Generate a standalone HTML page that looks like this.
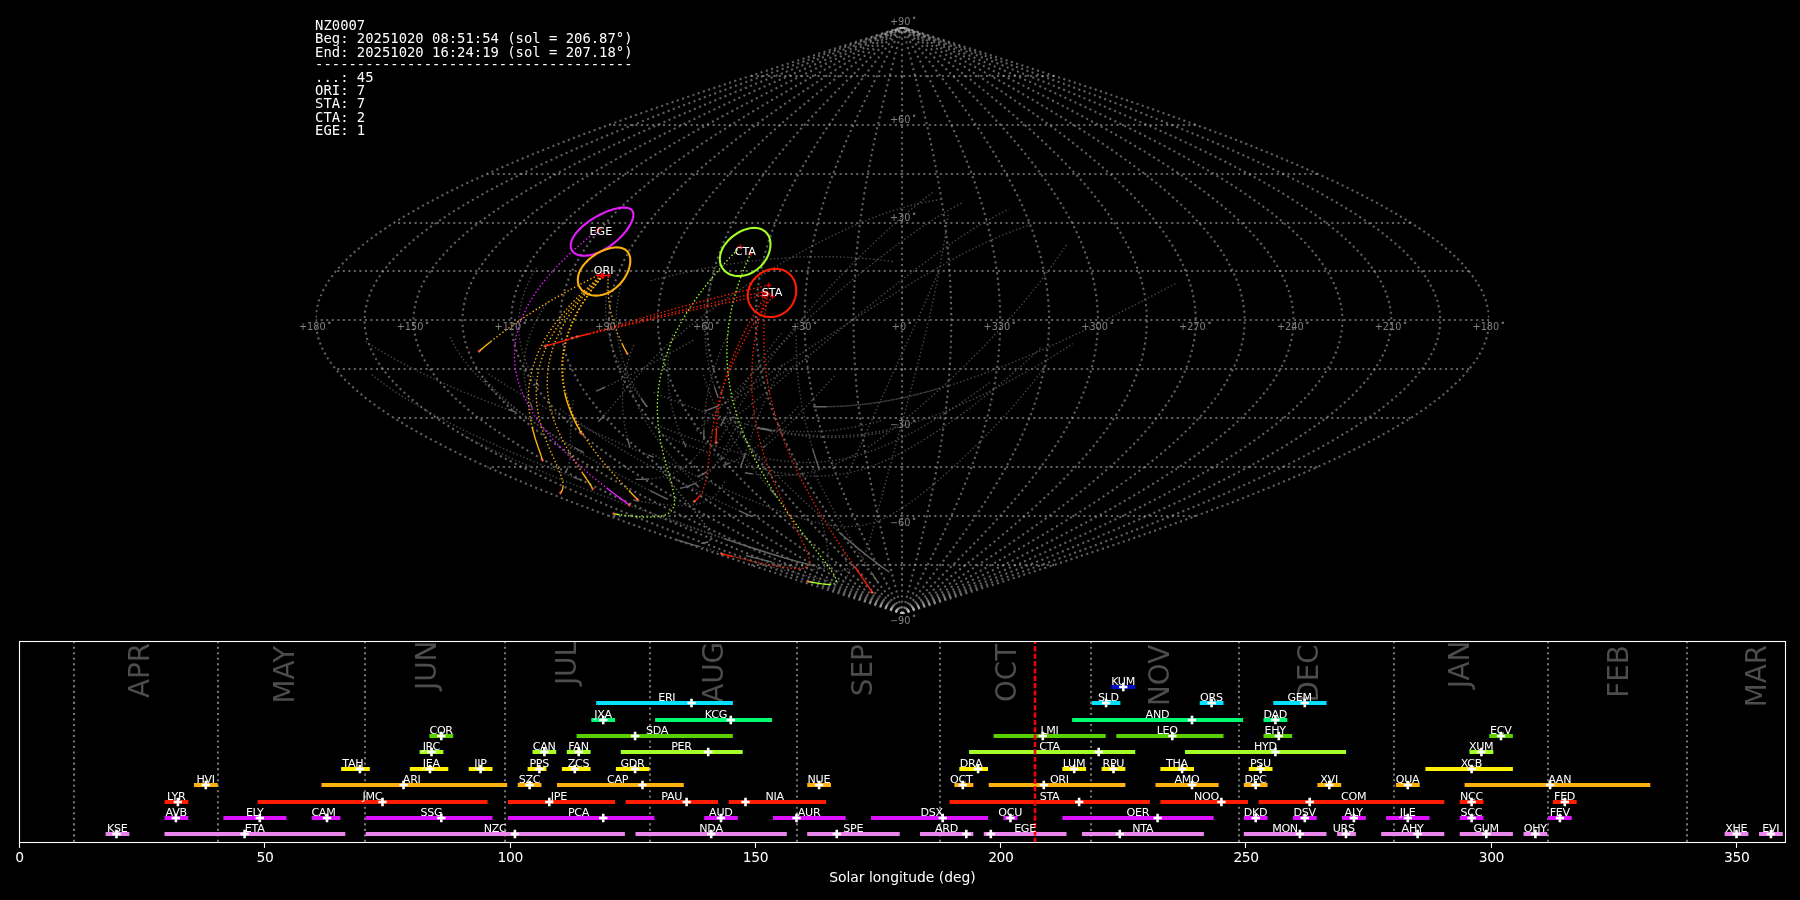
<!DOCTYPE html>
<html lang="en"><head><meta charset="utf-8"><title>NZ0007 shower association</title>
<style>html,body{margin:0;padding:0;background:#000;overflow:hidden}svg{display:block;will-change:transform}</style></head>
<body><svg width="1800" height="900" viewBox="0 0 1800 900">
<defs><clipPath id="actclip"><rect x="19.5" y="641.5" width="1766" height="201"/></clipPath><clipPath id="skyclip"><rect x="315.6" y="27.0" width="1173.6" height="586.8"/></clipPath></defs>
<rect width="1800" height="900" fill="#000000"/>
<g clip-path="url(#skyclip)">
<g fill="none" stroke="#c0c0c0" stroke-opacity="0.5" stroke-width="2.083" stroke-dasharray="2.083 3.437">
<polyline points="902.0,613.8 902.0,604.0 902.0,594.2 902.0,584.4 902.0,574.6 902.0,564.9 902.0,555.1 902.0,545.3 902.0,535.5 902.0,525.7 902.0,516.0 902.0,506.2 902.0,496.4 902.0,486.6 902.0,476.8 902.0,467.1 902.0,457.3 902.0,447.5 902.0,437.7 902.0,427.9 902.0,418.2 902.0,408.4 902.0,398.6 902.0,388.8 902.0,379.0 902.0,369.2 902.0,359.5 902.0,349.7 902.0,339.9 902.0,330.1 902.0,320.4 902.0,310.6 902.0,300.8 902.0,291.0 902.0,281.2 902.0,271.5 902.0,261.7 902.0,251.9 902.0,242.1 902.0,232.3 902.0,222.6 902.0,212.8 902.0,203.0 902.0,193.2 902.0,183.4 902.0,173.7 902.0,163.9 902.0,154.1 902.0,144.3 902.0,134.5 902.0,124.8 902.0,115.0 902.0,105.2 902.0,95.4 902.0,85.6 902.0,75.9 902.0,66.1 902.0,56.3 902.0,46.5 902.0,36.7 902.0,27.0"/>
<polyline points="902.4,613.8 899.8,604.0 897.3,594.2 894.8,584.4 892.2,574.6 889.7,564.9 887.3,555.1 884.9,545.3 882.5,535.5 880.2,525.7 877.9,516.0 875.8,506.2 873.7,496.4 871.6,486.6 869.7,476.8 867.8,467.1 866.1,457.3 864.4,447.5 862.8,437.7 861.4,427.9 860.1,418.2 858.8,408.4 857.7,398.6 856.7,388.8 855.9,379.0 855.2,369.2 854.6,359.5 854.1,349.7 853.8,339.9 853.6,330.1 853.5,320.4 853.6,310.6 853.8,300.8 854.1,291.0 854.6,281.2 855.2,271.5 855.9,261.7 856.7,251.9 857.7,242.1 858.8,232.3 860.1,222.6 861.4,212.8 862.8,203.0 864.4,193.2 866.1,183.4 867.8,173.7 869.7,163.9 871.6,154.1 873.7,144.3 875.8,134.5 877.9,124.8 880.2,115.0 882.5,105.2 884.9,95.4 887.3,85.6 889.7,75.9 892.2,66.1 894.8,56.3 897.3,46.5 899.8,36.7 902.4,27.0"/>
<polyline points="902.4,613.8 897.3,604.0 892.2,594.2 887.1,584.4 882.1,574.6 877.1,564.9 872.2,555.1 867.4,545.3 862.6,535.5 858.0,525.7 853.5,516.0 849.1,506.2 844.9,496.4 840.9,486.6 837.0,476.8 833.2,467.1 829.7,457.3 826.4,447.5 823.3,437.7 820.4,427.9 817.7,418.2 815.3,408.4 813.1,398.6 811.1,388.8 809.4,379.0 807.9,369.2 806.7,359.5 805.8,349.7 805.1,339.9 804.7,330.1 804.6,320.4 804.7,310.6 805.1,300.8 805.8,291.0 806.7,281.2 807.9,271.5 809.4,261.7 811.1,251.9 813.1,242.1 815.3,232.3 817.7,222.6 820.4,212.8 823.3,203.0 826.4,193.2 829.7,183.4 833.2,173.7 837.0,163.9 840.9,154.1 844.9,144.3 849.1,134.5 853.5,124.8 858.0,115.0 862.6,105.2 867.4,95.4 872.2,85.6 877.1,75.9 882.1,66.1 887.1,56.3 892.2,46.5 897.3,36.7 902.4,27.0"/>
<polyline points="902.4,613.8 894.7,604.0 887.1,594.2 879.5,584.4 871.9,574.6 864.4,564.9 857.1,555.1 849.8,545.3 842.7,535.5 835.8,525.7 829.0,516.0 822.5,506.2 816.2,496.4 810.1,486.6 804.2,476.8 798.7,467.1 793.4,457.3 788.4,447.5 783.7,437.7 779.4,427.9 775.4,418.2 771.7,408.4 768.4,398.6 765.4,388.8 762.9,379.0 760.7,369.2 758.9,359.5 757.5,349.7 756.5,339.9 755.9,330.1 755.7,320.4 755.9,310.6 756.5,300.8 757.5,291.0 758.9,281.2 760.7,271.5 762.9,261.7 765.4,251.9 768.4,242.1 771.7,232.3 775.4,222.6 779.4,212.8 783.7,203.0 788.4,193.2 793.4,183.4 798.7,173.7 804.2,163.9 810.1,154.1 816.2,144.3 822.5,134.5 829.0,124.8 835.8,115.0 842.7,105.2 849.8,95.4 857.1,85.6 864.4,75.9 871.9,66.1 879.5,56.3 887.1,46.5 894.7,36.7 902.4,27.0"/>
<polyline points="902.4,613.8 892.2,604.0 882.0,594.2 871.8,584.4 861.7,574.6 851.8,564.9 842.0,555.1 832.3,545.3 822.8,535.5 813.6,525.7 804.6,516.0 795.9,506.2 787.4,496.4 779.3,486.6 771.5,476.8 764.1,467.1 757.0,457.3 750.4,447.5 744.2,437.7 738.4,427.9 733.0,418.2 728.1,408.4 723.7,398.6 719.8,388.8 716.4,379.0 713.5,369.2 711.1,359.5 709.2,349.7 707.9,339.9 707.1,330.1 706.8,320.4 707.1,310.6 707.9,300.8 709.2,291.0 711.1,281.2 713.5,271.5 716.4,261.7 719.8,251.9 723.7,242.1 728.1,232.3 733.0,222.6 738.4,212.8 744.2,203.0 750.4,193.2 757.0,183.4 764.1,173.7 771.5,163.9 779.3,154.1 787.4,144.3 795.9,134.5 804.6,124.8 813.6,115.0 822.8,105.2 832.3,95.4 842.0,85.6 851.8,75.9 861.7,66.1 871.8,56.3 882.0,46.5 892.2,36.7 902.4,27.0"/>
<polyline points="902.4,613.8 889.6,604.0 876.8,594.2 864.2,584.4 851.6,574.6 839.1,564.9 826.8,555.1 814.8,545.3 803.0,535.5 791.4,525.7 780.1,516.0 769.2,506.2 758.7,496.4 748.5,486.6 738.8,476.8 729.5,467.1 720.7,457.3 712.4,447.5 704.6,437.7 697.3,427.9 690.7,418.2 684.5,408.4 679.0,398.6 674.1,388.8 669.9,379.0 666.2,369.2 663.2,359.5 660.9,349.7 659.2,339.9 658.2,330.1 657.9,320.4 658.2,310.6 659.2,300.8 660.9,291.0 663.2,281.2 666.2,271.5 669.9,261.7 674.1,251.9 679.0,242.1 684.5,232.3 690.7,222.6 697.3,212.8 704.6,203.0 712.4,193.2 720.7,183.4 729.5,173.7 738.8,163.9 748.5,154.1 758.7,144.3 769.2,134.5 780.1,124.8 791.4,115.0 803.0,105.2 814.8,95.4 826.8,85.6 839.1,75.9 851.6,66.1 864.2,56.3 876.8,46.5 889.6,36.7 902.4,27.0"/>
<polyline points="902.4,613.8 887.0,604.0 871.7,594.2 856.5,584.4 841.4,574.6 826.5,564.9 811.7,555.1 797.3,545.3 783.1,535.5 769.2,525.7 755.7,516.0 742.6,506.2 729.9,496.4 717.8,486.6 706.1,476.8 694.9,467.1 684.4,457.3 674.4,447.5 665.0,437.7 656.3,427.9 648.3,418.2 641.0,408.4 634.4,398.6 628.5,388.8 623.4,379.0 619.0,369.2 615.4,359.5 612.6,349.7 610.6,339.9 609.4,330.1 609.0,320.4 609.4,310.6 610.6,300.8 612.6,291.0 615.4,281.2 619.0,271.5 623.4,261.7 628.5,251.9 634.4,242.1 641.0,232.3 648.3,222.6 656.3,212.8 665.0,203.0 674.4,193.2 684.4,183.4 694.9,173.7 706.1,163.9 717.8,154.1 729.9,144.3 742.6,134.5 755.7,124.8 769.2,115.0 783.1,105.2 797.3,95.4 811.7,85.6 826.5,75.9 841.4,66.1 856.5,56.3 871.7,46.5 887.0,36.7 902.4,27.0"/>
<polyline points="902.4,613.8 884.5,604.0 866.6,594.2 848.9,584.4 831.2,574.6 813.8,564.9 796.6,555.1 779.7,545.3 763.2,535.5 747.0,525.7 731.2,516.0 716.0,506.2 701.2,496.4 687.0,486.6 673.4,476.8 660.4,467.1 648.0,457.3 636.4,447.5 625.5,437.7 615.3,427.9 606.0,418.2 597.4,408.4 589.7,398.6 582.8,388.8 576.9,379.0 571.8,369.2 567.6,359.5 564.3,349.7 562.0,339.9 560.6,330.1 560.1,320.4 560.6,310.6 562.0,300.8 564.3,291.0 567.6,281.2 571.8,271.5 576.9,261.7 582.8,251.9 589.7,242.1 597.4,232.3 606.0,222.6 615.3,212.8 625.5,203.0 636.4,193.2 648.0,183.4 660.4,173.7 673.4,163.9 687.0,154.1 701.2,144.3 716.0,134.5 731.2,124.8 747.0,115.0 763.2,105.2 779.7,95.4 796.6,85.6 813.8,75.9 831.2,66.1 848.9,56.3 866.6,46.5 884.5,36.7 902.4,27.0"/>
<polyline points="902.4,613.8 881.9,604.0 861.5,594.2 841.2,584.4 821.1,574.6 801.1,564.9 781.5,555.1 762.2,545.3 743.3,535.5 724.8,525.7 706.8,516.0 689.3,506.2 672.5,496.4 656.2,486.6 640.6,476.8 625.8,467.1 611.7,457.3 598.4,447.5 585.9,437.7 574.3,427.9 563.6,418.2 553.8,408.4 545.0,398.6 537.2,388.8 530.3,379.0 524.5,369.2 519.7,359.5 516.0,349.7 513.3,339.9 511.7,330.1 511.2,320.4 511.7,310.6 513.3,300.8 516.0,291.0 519.7,281.2 524.5,271.5 530.3,261.7 537.2,251.9 545.0,242.1 553.8,232.3 563.6,222.6 574.3,212.8 585.9,203.0 598.4,193.2 611.7,183.4 625.8,173.7 640.6,163.9 656.2,154.1 672.5,144.3 689.3,134.5 706.8,124.8 724.8,115.0 743.3,105.2 762.2,95.4 781.5,85.6 801.1,75.9 821.1,66.1 841.2,56.3 861.5,46.5 881.9,36.7 902.4,27.0"/>
<polyline points="902.4,613.8 879.4,604.0 856.4,594.2 833.6,584.4 810.9,574.6 788.5,564.9 766.4,555.1 744.7,545.3 723.4,535.5 702.6,525.7 682.3,516.0 662.7,506.2 643.7,496.4 625.4,486.6 607.9,476.8 591.2,467.1 575.3,457.3 560.4,447.5 546.4,437.7 533.3,427.9 521.3,418.2 510.3,408.4 500.3,398.6 491.5,388.8 483.8,379.0 477.3,369.2 471.9,359.5 467.7,349.7 464.7,339.9 462.9,330.1 462.3,320.4 462.9,310.6 464.7,300.8 467.7,291.0 471.9,281.2 477.3,271.5 483.8,261.7 491.5,251.9 500.3,242.1 510.3,232.3 521.3,222.6 533.3,212.8 546.4,203.0 560.4,193.2 575.3,183.4 591.2,173.7 607.9,163.9 625.4,154.1 643.7,144.3 662.7,134.5 682.3,124.8 702.6,115.0 723.4,105.2 744.7,95.4 766.4,85.6 788.5,75.9 810.9,66.1 833.6,56.3 856.4,46.5 879.4,36.7 902.4,27.0"/>
<polyline points="902.4,613.8 876.8,604.0 851.3,594.2 825.9,584.4 800.7,574.6 775.8,564.9 751.3,555.1 727.2,545.3 703.5,535.5 680.4,525.7 657.9,516.0 636.1,506.2 615.0,496.4 594.7,486.6 575.2,476.8 556.6,467.1 539.0,457.3 522.4,447.5 506.8,437.7 492.3,427.9 478.9,418.2 466.7,408.4 455.7,398.6 445.9,388.8 437.3,379.0 430.1,369.2 424.1,359.5 419.4,349.7 416.1,339.9 414.1,330.1 413.4,320.4 414.1,310.6 416.1,300.8 419.4,291.0 424.1,281.2 430.1,271.5 437.3,261.7 445.9,251.9 455.7,242.1 466.7,232.3 478.9,222.6 492.3,212.8 506.8,203.0 522.4,193.2 539.0,183.4 556.6,173.7 575.2,163.9 594.7,154.1 615.0,144.3 636.1,134.5 657.9,124.8 680.4,115.0 703.5,105.2 727.2,95.4 751.3,85.6 775.8,75.9 800.7,66.1 825.9,56.3 851.3,46.5 876.8,36.7 902.4,27.0"/>
<polyline points="902.4,613.8 874.2,604.0 846.2,594.2 818.3,584.4 790.6,574.6 763.2,564.9 736.2,555.1 709.6,545.3 683.6,535.5 658.2,525.7 633.4,516.0 609.4,506.2 586.2,496.4 563.9,486.6 542.5,476.8 522.0,467.1 502.7,457.3 484.4,447.5 467.2,437.7 451.3,427.9 436.6,418.2 423.1,408.4 411.0,398.6 400.2,388.8 390.8,379.0 382.8,369.2 376.3,359.5 371.1,349.7 367.4,339.9 365.2,330.1 364.5,320.4 365.2,310.6 367.4,300.8 371.1,291.0 376.3,281.2 382.8,271.5 390.8,261.7 400.2,251.9 411.0,242.1 423.1,232.3 436.6,222.6 451.3,212.8 467.2,203.0 484.4,193.2 502.7,183.4 522.0,173.7 542.5,163.9 563.9,154.1 586.2,144.3 609.4,134.5 633.4,124.8 658.2,115.0 683.6,105.2 709.6,95.4 736.2,85.6 763.2,75.9 790.6,66.1 818.3,56.3 846.2,46.5 874.2,36.7 902.4,27.0"/>
<polyline points="902.4,613.8 871.7,604.0 841.1,594.2 810.6,584.4 780.4,574.6 750.5,564.9 721.1,555.1 692.1,545.3 663.7,535.5 636.0,525.7 609.0,516.0 582.8,506.2 557.5,496.4 533.1,486.6 509.8,476.8 487.5,467.1 466.3,457.3 446.4,447.5 427.7,437.7 410.3,427.9 394.2,418.2 379.6,408.4 366.3,398.6 354.6,388.8 344.3,379.0 335.6,369.2 328.4,359.5 322.8,349.7 318.8,339.9 316.4,330.1 315.6,320.4 316.4,310.6 318.8,300.8 322.8,291.0 328.4,281.2 335.6,271.5 344.3,261.7 354.6,251.9 366.3,242.1 379.6,232.3 394.2,222.6 410.3,212.8 427.7,203.0 446.4,193.2 466.3,183.4 487.5,173.7 509.8,163.9 533.1,154.1 557.5,144.3 582.8,134.5 609.0,124.8 636.0,115.0 663.7,105.2 692.1,95.4 721.1,85.6 750.5,75.9 780.4,66.1 810.6,56.3 841.1,46.5 871.7,36.7 902.4,27.0"/>
<polyline points="902.4,613.8 933.1,604.0 963.7,594.2 994.2,584.4 1024.4,574.6 1054.3,564.9 1083.7,555.1 1112.7,545.3 1141.1,535.5 1168.8,525.7 1195.8,516.0 1222.0,506.2 1247.3,496.4 1271.7,486.6 1295.0,476.8 1317.3,467.1 1338.5,457.3 1358.4,447.5 1377.1,437.7 1394.5,427.9 1410.6,418.2 1425.2,408.4 1438.5,398.6 1450.2,388.8 1460.5,379.0 1469.2,369.2 1476.4,359.5 1482.0,349.7 1486.0,339.9 1488.4,330.1 1489.2,320.4 1488.4,310.6 1486.0,300.8 1482.0,291.0 1476.4,281.2 1469.2,271.5 1460.5,261.7 1450.2,251.9 1438.5,242.1 1425.2,232.3 1410.6,222.6 1394.5,212.8 1377.1,203.0 1358.4,193.2 1338.5,183.4 1317.3,173.7 1295.0,163.9 1271.7,154.1 1247.3,144.3 1222.0,134.5 1195.8,124.8 1168.8,115.0 1141.1,105.2 1112.7,95.4 1083.7,85.6 1054.3,75.9 1024.4,66.1 994.2,56.3 963.7,46.5 933.1,36.7 902.4,27.0"/>
<polyline points="902.4,613.8 930.6,604.0 958.6,594.2 986.5,584.4 1014.2,574.6 1041.6,564.9 1068.6,555.1 1095.2,545.3 1121.2,535.5 1146.6,525.7 1171.3,516.0 1195.4,506.2 1218.6,496.4 1240.9,486.6 1262.3,476.8 1282.8,467.1 1302.1,457.3 1320.4,447.5 1337.6,437.7 1353.5,427.9 1368.2,418.2 1381.7,408.4 1393.8,398.6 1404.6,388.8 1414.0,379.0 1422.0,369.2 1428.5,359.5 1433.7,349.7 1437.4,339.9 1439.6,330.1 1440.3,320.4 1439.6,310.6 1437.4,300.8 1433.7,291.0 1428.5,281.2 1422.0,271.5 1414.0,261.7 1404.6,251.9 1393.8,242.1 1381.7,232.3 1368.2,222.6 1353.5,212.8 1337.6,203.0 1320.4,193.2 1302.1,183.4 1282.8,173.7 1262.3,163.9 1240.9,154.1 1218.6,144.3 1195.4,134.5 1171.3,124.8 1146.6,115.0 1121.2,105.2 1095.2,95.4 1068.6,85.6 1041.6,75.9 1014.2,66.1 986.5,56.3 958.6,46.5 930.6,36.7 902.4,27.0"/>
<polyline points="902.4,613.8 928.0,604.0 953.5,594.2 978.9,584.4 1004.1,574.6 1029.0,564.9 1053.5,555.1 1077.6,545.3 1101.3,535.5 1124.4,525.7 1146.9,516.0 1168.7,506.2 1189.8,496.4 1210.1,486.6 1229.6,476.8 1248.2,467.1 1265.8,457.3 1282.4,447.5 1298.0,437.7 1312.5,427.9 1325.9,418.2 1338.1,408.4 1349.1,398.6 1358.9,388.8 1367.5,379.0 1374.7,369.2 1380.7,359.5 1385.4,349.7 1388.7,339.9 1390.7,330.1 1391.4,320.4 1390.7,310.6 1388.7,300.8 1385.4,291.0 1380.7,281.2 1374.7,271.5 1367.5,261.7 1358.9,251.9 1349.1,242.1 1338.1,232.3 1325.9,222.6 1312.5,212.8 1298.0,203.0 1282.4,193.2 1265.8,183.4 1248.2,173.7 1229.6,163.9 1210.1,154.1 1189.8,144.3 1168.7,134.5 1146.9,124.8 1124.4,115.0 1101.3,105.2 1077.6,95.4 1053.5,85.6 1029.0,75.9 1004.1,66.1 978.9,56.3 953.5,46.5 928.0,36.7 902.4,27.0"/>
<polyline points="902.4,613.8 925.4,604.0 948.4,594.2 971.2,584.4 993.9,574.6 1016.3,564.9 1038.4,555.1 1060.1,545.3 1081.4,535.5 1102.2,525.7 1122.5,516.0 1142.1,506.2 1161.1,496.4 1179.4,486.6 1196.9,476.8 1213.6,467.1 1229.5,457.3 1244.4,447.5 1258.4,437.7 1271.5,427.9 1283.5,418.2 1294.5,408.4 1304.5,398.6 1313.3,388.8 1321.0,379.0 1327.5,369.2 1332.9,359.5 1337.1,349.7 1340.1,339.9 1341.9,330.1 1342.5,320.4 1341.9,310.6 1340.1,300.8 1337.1,291.0 1332.9,281.2 1327.5,271.5 1321.0,261.7 1313.3,251.9 1304.5,242.1 1294.5,232.3 1283.5,222.6 1271.5,212.8 1258.4,203.0 1244.4,193.2 1229.5,183.4 1213.6,173.7 1196.9,163.9 1179.4,154.1 1161.1,144.3 1142.1,134.5 1122.5,124.8 1102.2,115.0 1081.4,105.2 1060.1,95.4 1038.4,85.6 1016.3,75.9 993.9,66.1 971.2,56.3 948.4,46.5 925.4,36.7 902.4,27.0"/>
<polyline points="902.4,613.8 922.9,604.0 943.3,594.2 963.6,584.4 983.7,574.6 1003.7,564.9 1023.3,555.1 1042.6,545.3 1061.5,535.5 1080.0,525.7 1098.0,516.0 1115.5,506.2 1132.3,496.4 1148.6,486.6 1164.2,476.8 1179.0,467.1 1193.1,457.3 1206.4,447.5 1218.9,437.7 1230.5,427.9 1241.2,418.2 1251.0,408.4 1259.8,398.6 1267.6,388.8 1274.5,379.0 1280.3,369.2 1285.1,359.5 1288.8,349.7 1291.5,339.9 1293.1,330.1 1293.6,320.4 1293.1,310.6 1291.5,300.8 1288.8,291.0 1285.1,281.2 1280.3,271.5 1274.5,261.7 1267.6,251.9 1259.8,242.1 1251.0,232.3 1241.2,222.6 1230.5,212.8 1218.9,203.0 1206.4,193.2 1193.1,183.4 1179.0,173.7 1164.2,163.9 1148.6,154.1 1132.3,144.3 1115.5,134.5 1098.0,124.8 1080.0,115.0 1061.5,105.2 1042.6,95.4 1023.3,85.6 1003.7,75.9 983.7,66.1 963.6,56.3 943.3,46.5 922.9,36.7 902.4,27.0"/>
<polyline points="902.4,613.8 920.3,604.0 938.2,594.2 955.9,584.4 973.6,574.6 991.0,564.9 1008.2,555.1 1025.1,545.3 1041.6,535.5 1057.8,525.7 1073.5,516.0 1088.8,506.2 1103.6,496.4 1117.8,486.6 1131.4,476.8 1144.4,467.1 1156.8,457.3 1168.4,447.5 1179.3,437.7 1189.5,427.9 1198.8,418.2 1207.4,408.4 1215.1,398.6 1222.0,388.8 1227.9,379.0 1233.0,369.2 1237.2,359.5 1240.5,349.7 1242.8,339.9 1244.2,330.1 1244.7,320.4 1244.2,310.6 1242.8,300.8 1240.5,291.0 1237.2,281.2 1233.0,271.5 1227.9,261.7 1222.0,251.9 1215.1,242.1 1207.4,232.3 1198.8,222.6 1189.5,212.8 1179.3,203.0 1168.4,193.2 1156.8,183.4 1144.4,173.7 1131.4,163.9 1117.8,154.1 1103.6,144.3 1088.8,134.5 1073.5,124.8 1057.8,115.0 1041.6,105.2 1025.1,95.4 1008.2,85.6 991.0,75.9 973.6,66.1 955.9,56.3 938.2,46.5 920.3,36.7 902.4,27.0"/>
<polyline points="902.4,613.8 917.8,604.0 933.1,594.2 948.3,584.4 963.4,574.6 978.3,564.9 993.1,555.1 1007.5,545.3 1021.7,535.5 1035.6,525.7 1049.1,516.0 1062.2,506.2 1074.9,496.4 1087.0,486.6 1098.7,476.8 1109.9,467.1 1120.4,457.3 1130.4,447.5 1139.8,437.7 1148.5,427.9 1156.5,418.2 1163.8,408.4 1170.4,398.6 1176.3,388.8 1181.4,379.0 1185.8,369.2 1189.4,359.5 1192.2,349.7 1194.2,339.9 1195.4,330.1 1195.8,320.4 1195.4,310.6 1194.2,300.8 1192.2,291.0 1189.4,281.2 1185.8,271.5 1181.4,261.7 1176.3,251.9 1170.4,242.1 1163.8,232.3 1156.5,222.6 1148.5,212.8 1139.8,203.0 1130.4,193.2 1120.4,183.4 1109.9,173.7 1098.7,163.9 1087.0,154.1 1074.9,144.3 1062.2,134.5 1049.1,124.8 1035.6,115.0 1021.7,105.2 1007.5,95.4 993.1,85.6 978.3,75.9 963.4,66.1 948.3,56.3 933.1,46.5 917.8,36.7 902.4,27.0"/>
<polyline points="902.4,613.8 915.2,604.0 928.0,594.2 940.6,584.4 953.2,574.6 965.7,564.9 978.0,555.1 990.0,545.3 1001.8,535.5 1013.4,525.7 1024.7,516.0 1035.6,506.2 1046.1,496.4 1056.3,486.6 1066.0,476.8 1075.3,467.1 1084.1,457.3 1092.4,447.5 1100.2,437.7 1107.5,427.9 1114.1,418.2 1120.3,408.4 1125.8,398.6 1130.7,388.8 1134.9,379.0 1138.6,369.2 1141.6,359.5 1143.9,349.7 1145.6,339.9 1146.6,330.1 1146.9,320.4 1146.6,310.6 1145.6,300.8 1143.9,291.0 1141.6,281.2 1138.6,271.5 1134.9,261.7 1130.7,251.9 1125.8,242.1 1120.3,232.3 1114.1,222.6 1107.5,212.8 1100.2,203.0 1092.4,193.2 1084.1,183.4 1075.3,173.7 1066.0,163.9 1056.3,154.1 1046.1,144.3 1035.6,134.5 1024.7,124.8 1013.4,115.0 1001.8,105.2 990.0,95.4 978.0,85.6 965.7,75.9 953.2,66.1 940.6,56.3 928.0,46.5 915.2,36.7 902.4,27.0"/>
<polyline points="902.4,613.8 912.6,604.0 922.8,594.2 933.0,584.4 943.1,574.6 953.0,564.9 962.8,555.1 972.5,545.3 982.0,535.5 991.2,525.7 1000.2,516.0 1008.9,506.2 1017.4,496.4 1025.5,486.6 1033.3,476.8 1040.7,467.1 1047.8,457.3 1054.4,447.5 1060.6,437.7 1066.4,427.9 1071.8,418.2 1076.7,408.4 1081.1,398.6 1085.0,388.8 1088.4,379.0 1091.3,369.2 1093.7,359.5 1095.6,349.7 1096.9,339.9 1097.7,330.1 1098.0,320.4 1097.7,310.6 1096.9,300.8 1095.6,291.0 1093.7,281.2 1091.3,271.5 1088.4,261.7 1085.0,251.9 1081.1,242.1 1076.7,232.3 1071.8,222.6 1066.4,212.8 1060.6,203.0 1054.4,193.2 1047.8,183.4 1040.7,173.7 1033.3,163.9 1025.5,154.1 1017.4,144.3 1008.9,134.5 1000.2,124.8 991.2,115.0 982.0,105.2 972.5,95.4 962.8,85.6 953.0,75.9 943.1,66.1 933.0,56.3 922.8,46.5 912.6,36.7 902.4,27.0"/>
<polyline points="902.4,613.8 910.1,604.0 917.7,594.2 925.3,584.4 932.9,574.6 940.4,564.9 947.7,555.1 955.0,545.3 962.1,535.5 969.0,525.7 975.8,516.0 982.3,506.2 988.6,496.4 994.7,486.6 1000.6,476.8 1006.1,467.1 1011.4,457.3 1016.4,447.5 1021.1,437.7 1025.4,427.9 1029.4,418.2 1033.1,408.4 1036.4,398.6 1039.4,388.8 1041.9,379.0 1044.1,369.2 1045.9,359.5 1047.3,349.7 1048.3,339.9 1048.9,330.1 1049.1,320.4 1048.9,310.6 1048.3,300.8 1047.3,291.0 1045.9,281.2 1044.1,271.5 1041.9,261.7 1039.4,251.9 1036.4,242.1 1033.1,232.3 1029.4,222.6 1025.4,212.8 1021.1,203.0 1016.4,193.2 1011.4,183.4 1006.1,173.7 1000.6,163.9 994.7,154.1 988.6,144.3 982.3,134.5 975.8,124.8 969.0,115.0 962.1,105.2 955.0,95.4 947.7,85.6 940.4,75.9 932.9,66.1 925.3,56.3 917.7,46.5 910.1,36.7 902.4,27.0"/>
<polyline points="902.4,613.8 907.5,604.0 912.6,594.2 917.7,584.4 922.7,574.6 927.7,564.9 932.6,555.1 937.4,545.3 942.2,535.5 946.8,525.7 951.3,516.0 955.7,506.2 959.9,496.4 963.9,486.6 967.8,476.8 971.6,467.1 975.1,457.3 978.4,447.5 981.5,437.7 984.4,427.9 987.1,418.2 989.5,408.4 991.7,398.6 993.7,388.8 995.4,379.0 996.9,369.2 998.1,359.5 999.0,349.7 999.7,339.9 1000.1,330.1 1000.2,320.4 1000.1,310.6 999.7,300.8 999.0,291.0 998.1,281.2 996.9,271.5 995.4,261.7 993.7,251.9 991.7,242.1 989.5,232.3 987.1,222.6 984.4,212.8 981.5,203.0 978.4,193.2 975.1,183.4 971.6,173.7 967.8,163.9 963.9,154.1 959.9,144.3 955.7,134.5 951.3,124.8 946.8,115.0 942.2,105.2 937.4,95.4 932.6,85.6 927.7,75.9 922.7,66.1 917.7,56.3 912.6,46.5 907.5,36.7 902.4,27.0"/>
<polyline points="902.4,613.8 905.0,604.0 907.5,594.2 910.0,584.4 912.6,574.6 915.1,564.9 917.5,555.1 919.9,545.3 922.3,535.5 924.6,525.7 926.9,516.0 929.0,506.2 931.1,496.4 933.2,486.6 935.1,476.8 937.0,467.1 938.7,457.3 940.4,447.5 942.0,437.7 943.4,427.9 944.7,418.2 946.0,408.4 947.1,398.6 948.1,388.8 948.9,379.0 949.6,369.2 950.2,359.5 950.7,349.7 951.0,339.9 951.2,330.1 951.3,320.4 951.2,310.6 951.0,300.8 950.7,291.0 950.2,281.2 949.6,271.5 948.9,261.7 948.1,251.9 947.1,242.1 946.0,232.3 944.7,222.6 943.4,212.8 942.0,203.0 940.4,193.2 938.7,183.4 937.0,173.7 935.1,163.9 933.2,154.1 931.1,144.3 929.0,134.5 926.9,124.8 924.6,115.0 922.3,105.2 919.9,95.4 917.5,85.6 915.1,75.9 912.6,66.1 910.0,56.3 907.5,46.5 905.0,36.7 902.4,27.0"/>
<polyline points="902.4,565.0 750.5,565.0"/>
<polyline points="1054.3,565.0 902.4,565.0"/>
<polyline points="902.4,516.0 609.0,516.0"/>
<polyline points="1195.8,516.0 902.4,516.0"/>
<polyline points="902.4,467.0 487.5,467.0"/>
<polyline points="1317.3,467.0 902.4,467.0"/>
<polyline points="902.4,418.0 394.2,418.0"/>
<polyline points="1410.6,418.0 902.4,418.0"/>
<polyline points="902.4,369.0 335.6,369.0"/>
<polyline points="1469.2,369.0 902.4,369.0"/>
<polyline points="902.4,320.0 315.6,320.0"/>
<polyline points="1489.2,320.0 902.4,320.0"/>
<polyline points="902.4,271.0 335.6,271.0"/>
<polyline points="1469.2,271.0 902.4,271.0"/>
<polyline points="902.4,223.0 394.2,223.0"/>
<polyline points="1410.6,223.0 902.4,223.0"/>
<polyline points="902.4,174.0 487.5,174.0"/>
<polyline points="1317.3,174.0 902.4,174.0"/>
<polyline points="902.4,125.0 609.0,125.0"/>
<polyline points="1195.8,125.0 902.4,125.0"/>
<polyline points="902.4,76.0 750.5,76.0"/>
<polyline points="1054.3,76.0 902.4,76.0"/>
</g>
<g fill="none" stroke="#666666" stroke-width="1.389">
<path d="M605.0 387.2 L603.2 388.0 L601.4 388.8 L599.7 389.6 L597.9 390.3 L596.1 391.1"/>
<path d="M641.7 398.9 L642.8 400.6 L643.8 402.2 L644.9 403.9 L646.1 405.5 L647.2 407.2"/>
<path d="M574.4 447.4 L576.3 448.5 L578.2 449.6 L580.1 450.6 L582.0 451.7 L583.9 452.8"/>
<path d="M603.9 415.6 L602.8 416.9 L601.7 418.1 L600.5 419.3 L599.4 420.5 L598.3 421.7"/>
<path d="M530.0 402.2 L530.5 403.6 L531.1 405.1 L531.6 406.5 L532.2 408.0 L532.8 409.4"/>
<path d="M508.3 409.4 L509.9 410.0 L511.4 410.5 L513.0 411.1 L514.5 411.6 L516.1 412.2"/>
<path d="M627.8 439.4 L628.2 441.0 L628.6 442.5 L629.1 444.1 L629.5 445.7 L630.0 447.2"/>
<path d="M648.3 455.0 L649.4 455.4 L650.5 455.9 L651.7 456.3 L652.8 456.8 L653.9 457.2"/>
<path d="M567.8 467.8 L567.4 468.7 L567.0 469.6 L566.6 470.5 L566.1 471.4 L565.6 472.2"/>
<path d="M536.1 381.7 L536.6 382.6 L537.2 383.5 L537.8 384.3 L538.3 385.2 L538.9 386.1"/>
<path d="M649.4 478.9 L646.8 479.1 L644.1 479.3 L641.4 479.4 L638.5 479.4 L635.6 479.4"/>
<path d="M650.0 490.6 L653.5 492.4 L657.1 494.1 L660.6 495.9 L664.2 497.6 L667.8 499.4"/>
<path d="M695.0 483.3 L692.3 484.6 L689.5 485.7 L686.5 486.7 L683.4 487.6 L680.0 488.3"/>
<path d="M695.0 483.3 L695.8 484.1 L696.6 484.9 L697.3 485.6 L698.1 486.4 L698.9 487.2"/>
<path d="M706.7 471.7 L704.9 472.8 L703.1 473.9 L701.2 474.9 L699.2 475.8 L697.2 476.7"/>
<path d="M573.3 477.2 L575.1 477.9 L576.9 478.6 L578.6 479.2 L580.4 479.9 L582.2 480.6"/>
<path d="M639.4 501.1 L638.2 500.9 L637.0 500.7 L635.8 500.5 L634.5 500.2 L633.3 500.0"/>
<path d="M700.0 546.7 L695.0 545.3 L690.0 543.8 L685.0 542.3 L680.0 540.9 L675.0 539.4"/>
<path d="M707.8 541.7 L706.8 542.1 L705.6 542.5 L704.3 542.9 L702.8 543.1 L701.1 543.3"/>
<path d="M714.4 386.7 L715.1 388.9 L715.9 391.1 L716.7 393.4 L717.5 395.6 L718.3 397.8"/>
<path d="M718.9 405.6 L716.0 406.8 L713.1 407.9 L710.2 409.0 L707.3 410.1 L704.4 411.1"/>
<path d="M641.1 398.9 L642.3 400.5 L643.5 402.0 L644.7 403.6 L645.9 405.1 L647.2 406.7"/>
<path d="M725.6 416.7 L724.6 418.5 L723.6 420.3 L722.6 422.1 L721.6 423.8 L720.6 425.6"/>
<path d="M826.7 406.7 L824.0 406.7 L821.4 406.8 L818.7 406.8 L816.0 406.7 L813.3 406.7"/>
<path d="M768.9 429.4 L766.6 429.1 L764.2 428.8 L761.9 428.5 L759.6 428.2 L757.2 427.8"/>
<path d="M772.2 431.1 L769.2 430.5 L766.2 429.9 L763.2 429.2 L760.2 428.5 L757.2 427.8"/>
<path d="M812.8 449.4 L814.0 453.4 L815.3 457.4 L816.6 461.4 L818.0 465.4 L819.4 469.4"/>
<path d="M745.6 452.8 L744.6 455.7 L743.6 458.5 L742.6 461.3 L741.6 464.0 L740.6 466.7"/>
<path d="M703.9 429.4 L703.9 431.5 L703.8 433.7 L703.8 435.8 L703.9 437.9 L703.9 440.0"/>
<path d="M683.3 441.1 L683.8 442.3 L684.4 443.5 L685.0 444.8 L685.5 446.0 L686.1 447.2"/>
<path d="M729.4 463.1 L728.1 463.6 L726.8 464.1 L725.5 464.6 L724.1 465.1 L722.8 465.6"/>
<path d="M752.8 473.9 L751.3 473.7 L749.7 473.5 L748.1 473.3 L746.6 473.0 L745.0 472.8"/>
<path d="M738.9 510.6 L741.6 511.8 L744.2 513.1 L746.9 514.3 L749.5 515.5 L752.2 516.7"/>
<path d="M770.0 488.9 L771.3 490.5 L772.7 492.0 L774.0 493.6 L775.3 495.1 L776.7 496.7"/>
<path d="M765.6 445.6 L765.0 446.0 L764.5 446.5 L763.9 446.9 L763.4 447.4 L762.8 447.8"/>
<path d="M723.9 538.7 L744.1 545.3 L763.6 551.5 L781.8 557.1 L798.5 561.9 L813.3 565.6"/>
<path d="M772.2 562.2 L767.3 561.0 L762.2 559.7 L757.0 558.4 L751.6 557.0 L746.1 555.6"/>
<path d="M838.9 532.2 L849.3 541.0 L859.6 549.6 L869.8 557.8 L879.8 565.4 L889.4 572.2"/>
<path d="M871.7 572.8 L872.9 574.7 L874.1 576.6 L875.4 578.4 L876.6 580.3 L877.8 582.2"/>
<path d="M708.3 541.7 L707.4 542.1 L706.3 542.5 L705.1 542.8 L703.7 543.1 L702.2 543.3"/>
</g>
<g fill="none" stroke="#666666" stroke-opacity="0.7" stroke-width="1.389" stroke-dasharray="1.389 2.292">
<path d="M693.3 340.2 L690.9 341.6 L688.5 342.9 L686.1 344.3 L683.7 345.6 L681.3 346.9 L678.9 348.3 L676.6 349.6 L674.2 350.9 L671.9 352.2 L669.5 353.5 L667.2 354.8 L664.9 356.1 L662.6 357.4 L660.3 358.6 L658.0 359.9 L655.7 361.2 L653.4 362.4 L651.2 363.7 L648.9 364.9 L646.7 366.1 L644.4 367.3 L642.2 368.5 L640.0 369.7 L637.7 370.9 L635.5 372.1 L633.3 373.2 L631.1 374.4 L628.9 375.5 L626.7 376.7 L624.6 377.8 L622.4 378.9 L620.2 380.0 L618.0 381.0 L615.8 382.1 L613.7 383.1 L611.5 384.2 L609.3 385.2 L607.2 386.2 L605.0 387.2"/>
<path d="M621.2 284.8 L620.4 287.7 L619.6 290.7 L619.0 293.6 L618.4 296.5 L617.9 299.4 L617.4 302.4 L617.1 305.3 L616.8 308.2 L616.5 311.1 L616.4 314.1 L616.3 317.0 L616.2 319.9 L616.3 322.8 L616.4 325.8 L616.6 328.7 L616.8 331.6 L617.2 334.5 L617.6 337.5 L618.0 340.4 L618.6 343.3 L619.2 346.2 L619.8 349.2 L620.6 352.1 L621.4 355.0 L622.3 357.9 L623.2 360.9 L624.2 363.8 L625.3 366.7 L626.5 369.6 L627.7 372.6 L629.0 375.5 L630.4 378.4 L631.8 381.3 L633.3 384.3 L634.8 387.2 L636.4 390.1 L638.1 393.0 L639.9 396.0 L641.7 398.9"/>
<path d="M450.0 337.1 L451.4 340.0 L452.8 342.8 L454.4 345.7 L456.1 348.5 L457.8 351.3 L459.7 354.2 L461.7 357.0 L463.8 359.9 L466.0 362.7 L468.2 365.5 L470.6 368.4 L473.1 371.2 L475.7 374.1 L478.3 376.9 L481.1 379.7 L484.0 382.6 L487.0 385.4 L490.0 388.2 L493.2 391.1 L496.4 393.9 L499.8 396.7 L503.2 399.6 L506.7 402.4 L510.3 405.2 L514.0 408.1 L517.8 410.9 L521.7 413.7 L525.6 416.5 L529.7 419.3 L533.8 422.2 L538.0 425.0 L542.3 427.8 L546.6 430.6 L551.1 433.4 L555.6 436.2 L560.2 439.0 L564.9 441.8 L569.6 444.6 L574.4 447.4"/>
<path d="M662.5 349.4 L660.6 351.2 L658.7 353.1 L656.9 354.9 L655.1 356.8 L653.3 358.6 L651.6 360.5 L649.9 362.3 L648.2 364.1 L646.5 366.0 L644.8 367.8 L643.2 369.6 L641.5 371.4 L639.9 373.2 L638.4 374.9 L636.8 376.7 L635.3 378.5 L633.7 380.2 L632.2 382.0 L630.8 383.7 L629.3 385.4 L627.8 387.1 L626.4 388.8 L625.0 390.5 L623.6 392.2 L622.2 393.9 L620.8 395.5 L619.5 397.1 L618.1 398.8 L616.8 400.4 L615.5 402.0 L614.2 403.6 L612.9 405.1 L611.6 406.7 L610.3 408.2 L609.0 409.7 L607.7 411.2 L606.4 412.7 L605.2 414.2 L603.9 415.6"/>
<path d="M547.9 301.4 L546.1 304.0 L544.4 306.6 L542.7 309.2 L541.1 311.8 L539.6 314.4 L538.1 317.0 L536.7 319.6 L535.4 322.2 L534.2 324.8 L533.0 327.4 L531.9 330.0 L530.9 332.6 L529.9 335.2 L529.0 337.8 L528.2 340.4 L527.5 343.0 L526.8 345.6 L526.2 348.2 L525.7 350.8 L525.2 353.4 L524.8 356.0 L524.5 358.6 L524.3 361.2 L524.1 363.8 L524.0 366.4 L524.0 369.0 L524.1 371.5 L524.2 374.1 L524.4 376.7 L524.6 379.3 L525.0 381.8 L525.4 384.4 L525.8 386.9 L526.4 389.5 L526.9 392.0 L527.6 394.6 L528.3 397.1 L529.1 399.7 L530.0 402.2"/>
<path d="M365.7 341.5 L368.5 343.4 L371.5 345.3 L374.5 347.2 L377.5 349.0 L380.6 350.9 L383.7 352.7 L386.9 354.6 L390.2 356.4 L393.4 358.3 L396.8 360.1 L400.2 362.0 L403.6 363.8 L407.0 365.6 L410.5 367.4 L414.1 369.2 L417.7 371.0 L421.3 372.8 L425.0 374.6 L428.7 376.4 L432.4 378.1 L436.2 379.9 L440.0 381.6 L443.8 383.4 L447.7 385.1 L451.6 386.8 L455.5 388.5 L459.4 390.2 L463.4 391.9 L467.4 393.5 L471.4 395.2 L475.4 396.8 L479.5 398.4 L483.6 400.1 L487.7 401.7 L491.8 403.2 L495.9 404.8 L500.0 406.3 L504.2 407.9 L508.3 409.4"/>
<path d="M633.7 345.1 L632.7 347.6 L631.7 350.1 L630.8 352.6 L629.9 355.1 L629.1 357.6 L628.4 360.1 L627.6 362.6 L627.0 365.1 L626.3 367.6 L625.8 370.1 L625.2 372.6 L624.8 375.0 L624.3 377.5 L623.9 380.0 L623.6 382.4 L623.3 384.9 L623.0 387.3 L622.8 389.8 L622.7 392.2 L622.6 394.6 L622.5 397.1 L622.5 399.5 L622.5 401.9 L622.5 404.3 L622.6 406.7 L622.8 409.1 L622.9 411.5 L623.1 413.9 L623.4 416.3 L623.7 418.6 L624.0 421.0 L624.4 423.3 L624.8 425.6 L625.2 428.0 L625.7 430.3 L626.2 432.6 L626.7 434.9 L627.2 437.1 L627.8 439.4"/>
<path d="M488.6 373.7 L491.9 376.0 L495.3 378.2 L498.8 380.5 L502.3 382.8 L505.9 385.0 L509.5 387.3 L513.1 389.5 L516.9 391.8 L520.6 394.0 L524.5 396.2 L528.3 398.4 L532.2 400.6 L536.2 402.8 L540.2 405.0 L544.2 407.2 L548.3 409.3 L552.4 411.5 L556.5 413.6 L560.7 415.7 L564.9 417.9 L569.1 420.0 L573.4 422.0 L577.7 424.1 L582.0 426.2 L586.3 428.2 L590.7 430.3 L595.0 432.3 L599.4 434.3 L603.8 436.3 L608.3 438.2 L612.7 440.2 L617.1 442.1 L621.6 444.0 L626.0 445.9 L630.5 447.8 L635.0 449.6 L639.4 451.4 L643.9 453.2 L648.3 455.0"/>
<path d="M573.4 399.9 L573.1 402.0 L572.7 404.1 L572.4 406.1 L572.1 408.1 L571.9 410.2 L571.6 412.2 L571.4 414.2 L571.2 416.2 L571.1 418.2 L570.9 420.1 L570.8 422.1 L570.7 424.0 L570.7 425.9 L570.6 427.8 L570.6 429.7 L570.5 431.6 L570.5 433.4 L570.5 435.2 L570.5 437.1 L570.5 438.8 L570.5 440.6 L570.5 442.3 L570.5 444.1 L570.4 445.8 L570.4 447.4 L570.4 449.1 L570.4 450.7 L570.3 452.3 L570.2 453.9 L570.1 455.4 L570.0 456.9 L569.9 458.4 L569.7 459.8 L569.5 461.2 L569.2 462.6 L568.9 464.0 L568.6 465.3 L568.2 466.6 L567.8 467.8"/>
<path d="M536.5 267.8 L534.8 270.7 L533.1 273.6 L531.5 276.5 L530.0 279.4 L528.6 282.4 L527.3 285.3 L526.1 288.2 L524.9 291.1 L523.9 294.1 L522.9 297.0 L522.1 299.9 L521.3 302.8 L520.7 305.7 L520.1 308.7 L519.6 311.6 L519.2 314.5 L518.9 317.4 L518.7 320.3 L518.6 323.3 L518.6 326.2 L518.7 329.1 L518.9 332.0 L519.1 335.0 L519.5 337.9 L520.0 340.8 L520.5 343.7 L521.2 346.6 L521.9 349.6 L522.7 352.5 L523.7 355.4 L524.7 358.3 L525.8 361.3 L527.0 364.2 L528.3 367.1 L529.7 370.0 L531.1 372.9 L532.7 375.9 L534.4 378.8 L536.1 381.7"/>
<path d="M710.4 437.1 L709.3 438.8 L708.2 440.4 L707.1 442.1 L706.0 443.7 L704.8 445.3 L703.7 446.9 L702.6 448.4 L701.4 450.0 L700.3 451.4 L699.1 452.9 L697.9 454.3 L696.7 455.8 L695.4 457.1 L694.2 458.5 L692.9 459.8 L691.6 461.0 L690.3 462.3 L688.9 463.5 L687.5 464.7 L686.1 465.8 L684.7 466.9 L683.2 467.9 L681.6 468.9 L680.0 469.9 L678.4 470.8 L676.7 471.7 L675.0 472.5 L673.2 473.3 L671.4 474.1 L669.5 474.8 L667.5 475.4 L665.5 476.0 L663.4 476.6 L661.3 477.1 L659.0 477.6 L656.7 478.0 L654.4 478.3 L651.9 478.6 L649.4 478.9"/>
<path d="M484.4 378.5 L486.9 381.4 L489.6 384.3 L492.4 387.2 L495.3 390.1 L498.3 393.0 L501.3 395.9 L504.5 398.7 L507.8 401.6 L511.1 404.5 L514.6 407.4 L518.1 410.3 L521.7 413.2 L525.5 416.1 L529.3 418.9 L533.2 421.8 L537.2 424.7 L541.2 427.6 L545.4 430.5 L549.6 433.3 L554.0 436.2 L558.4 439.1 L562.8 442.0 L567.4 444.8 L572.1 447.7 L576.8 450.6 L581.6 453.5 L586.4 456.3 L591.4 459.2 L596.4 462.1 L601.4 464.9 L606.6 467.8 L611.8 470.6 L617.1 473.5 L622.4 476.4 L627.8 479.2 L633.3 482.1 L638.8 484.9 L644.4 487.8 L650.0 490.6"/>
<path d="M738.3 422.5 L737.3 424.6 L736.3 426.6 L735.3 428.6 L734.3 430.5 L733.3 432.5 L732.3 434.4 L731.4 436.4 L730.4 438.3 L729.5 440.1 L728.5 442.0 L727.6 443.9 L726.6 445.7 L725.7 447.5 L724.7 449.3 L723.8 451.0 L722.8 452.7 L721.8 454.4 L720.9 456.1 L719.9 457.8 L718.9 459.4 L717.9 461.0 L716.9 462.5 L715.9 464.0 L714.8 465.5 L713.7 467.0 L712.6 468.4 L711.5 469.8 L710.3 471.2 L709.2 472.5 L707.9 473.8 L706.7 475.0 L705.4 476.2 L704.0 477.3 L702.7 478.4 L701.2 479.5 L699.8 480.5 L698.2 481.5 L696.6 482.4 L695.0 483.3"/>
<path d="M626.6 372.9 L627.3 375.7 L628.0 378.6 L628.7 381.4 L629.5 384.3 L630.4 387.2 L631.4 390.0 L632.4 392.9 L633.5 395.7 L634.6 398.6 L635.8 401.4 L637.1 404.3 L638.4 407.1 L639.8 410.0 L641.2 412.8 L642.7 415.7 L644.3 418.5 L645.9 421.4 L647.6 424.2 L649.3 427.0 L651.1 429.9 L652.9 432.7 L654.9 435.5 L656.8 438.4 L658.8 441.2 L660.9 444.0 L663.0 446.9 L665.2 449.7 L667.4 452.5 L669.7 455.3 L672.0 458.1 L674.4 460.9 L676.8 463.8 L679.3 466.6 L681.8 469.4 L684.3 472.2 L686.9 475.0 L689.6 477.7 L692.3 480.5 L695.0 483.3"/>
<path d="M757.1 408.4 L755.8 410.4 L754.5 412.4 L753.2 414.4 L751.9 416.4 L750.6 418.4 L749.4 420.3 L748.1 422.2 L746.9 424.1 L745.7 426.0 L744.4 427.9 L743.2 429.8 L742.0 431.6 L740.8 433.4 L739.6 435.2 L738.4 437.0 L737.2 438.8 L736.0 440.5 L734.8 442.2 L733.6 443.9 L732.3 445.6 L731.1 447.3 L729.9 448.9 L728.7 450.5 L727.5 452.0 L726.2 453.6 L725.0 455.1 L723.7 456.6 L722.4 458.0 L721.1 459.5 L719.8 460.8 L718.4 462.2 L717.1 463.5 L715.7 464.8 L714.3 466.0 L712.8 467.3 L711.3 468.4 L709.8 469.6 L708.3 470.6 L706.7 471.7"/>
<path d="M371.7 374.6 L375.2 377.3 L378.7 380.0 L382.4 382.8 L386.2 385.5 L390.1 388.2 L394.0 390.9 L398.1 393.6 L402.3 396.3 L406.6 399.0 L411.0 401.6 L415.5 404.3 L420.1 407.0 L424.8 409.7 L429.6 412.4 L434.4 415.0 L439.4 417.7 L444.4 420.4 L449.6 423.0 L454.8 425.7 L460.1 428.3 L465.4 431.0 L470.9 433.6 L476.4 436.2 L482.0 438.9 L487.7 441.5 L493.5 444.1 L499.3 446.7 L505.1 449.3 L511.1 451.9 L517.1 454.5 L523.1 457.0 L529.3 459.6 L535.4 462.1 L541.6 464.7 L547.9 467.2 L554.2 469.7 L560.5 472.2 L566.9 474.7 L573.3 477.2"/>
<path d="M724.5 481.5 L723.8 483.0 L723.1 484.6 L722.3 486.0 L721.4 487.5 L720.6 488.9 L719.7 490.2 L718.7 491.5 L717.7 492.8 L716.6 494.0 L715.5 495.1 L714.2 496.2 L713.0 497.3 L711.6 498.3 L710.2 499.2 L708.7 500.1 L707.1 500.9 L705.4 501.6 L703.6 502.3 L701.8 502.9 L699.8 503.5 L697.7 504.0 L695.5 504.4 L693.2 504.8 L690.8 505.1 L688.3 505.3 L685.6 505.4 L682.8 505.5 L679.9 505.5 L676.9 505.5 L673.7 505.3 L670.4 505.1 L667.0 504.9 L663.4 504.5 L659.8 504.1 L655.9 503.6 L652.0 503.1 L647.9 502.5 L643.7 501.8 L639.4 501.1"/>
<path d="M843.1 550.0 L843.8 552.4 L844.5 554.9 L845.1 557.3 L845.7 559.6 L846.3 561.9 L846.8 564.2 L847.2 566.3 L847.6 568.4 L847.8 570.4 L847.9 572.2 L847.9 574.0 L847.6 575.6 L847.2 577.0 L846.4 578.3 L845.4 579.3 L844.0 580.2 L842.2 580.8 L839.9 581.1 L837.2 581.2 L833.9 581.1 L830.1 580.6 L825.8 580.0 L821.0 579.1 L815.6 577.9 L809.8 576.6 L803.6 575.1 L797.0 573.5 L790.1 571.7 L782.8 569.8 L775.3 567.8 L767.5 565.7 L759.5 563.5 L751.4 561.3 L743.1 559.0 L734.6 556.6 L726.1 554.2 L717.5 551.7 L708.8 549.2 L700.0 546.7"/>
<path d="M660.5 468.4 L662.2 470.9 L664.0 473.4 L665.8 475.8 L667.6 478.3 L669.5 480.7 L671.3 483.1 L673.2 485.5 L675.1 487.9 L677.0 490.2 L678.9 492.6 L680.7 494.9 L682.6 497.2 L684.5 499.4 L686.4 501.7 L688.2 503.9 L690.0 506.1 L691.8 508.2 L693.6 510.3 L695.3 512.4 L697.0 514.4 L698.6 516.4 L700.2 518.4 L701.7 520.3 L703.1 522.1 L704.4 523.9 L705.7 525.7 L706.8 527.4 L707.8 529.0 L708.7 530.6 L709.5 532.1 L710.1 533.5 L710.5 534.8 L710.7 536.1 L710.8 537.3 L710.7 538.3 L710.3 539.3 L709.7 540.2 L708.9 541.0 L707.8 541.7"/>
<path d="M713.9 272.7 L713.0 275.7 L712.2 278.6 L711.4 281.5 L710.6 284.4 L709.9 287.3 L709.2 290.3 L708.6 293.2 L708.1 296.1 L707.6 299.0 L707.1 302.0 L706.7 304.9 L706.3 307.8 L706.0 310.7 L705.7 313.6 L705.5 316.6 L705.3 319.5 L705.2 322.4 L705.1 325.3 L705.0 328.3 L705.0 331.2 L705.1 334.1 L705.2 337.0 L705.4 339.9 L705.6 342.9 L705.8 345.8 L706.1 348.7 L706.5 351.6 L706.9 354.6 L707.3 357.5 L707.8 360.4 L708.4 363.3 L709.0 366.2 L709.6 369.2 L710.3 372.1 L711.0 375.0 L711.8 377.9 L712.6 380.9 L713.5 383.8 L714.4 386.7"/>
<path d="M809.3 356.8 L806.9 358.3 L804.5 359.8 L802.1 361.2 L799.7 362.6 L797.4 364.1 L795.0 365.5 L792.7 366.9 L790.3 368.3 L788.0 369.7 L785.6 371.1 L783.3 372.5 L781.0 373.8 L778.6 375.2 L776.3 376.5 L774.0 377.9 L771.7 379.2 L769.4 380.5 L767.1 381.8 L764.8 383.1 L762.5 384.4 L760.2 385.6 L757.9 386.9 L755.6 388.1 L753.3 389.3 L751.0 390.5 L748.7 391.7 L746.4 392.9 L744.1 394.0 L741.8 395.2 L739.6 396.3 L737.3 397.4 L735.0 398.5 L732.7 399.6 L730.4 400.6 L728.1 401.6 L725.8 402.7 L723.5 403.7 L721.2 404.6 L718.9 405.6"/>
<path d="M607.5 285.6 L607.1 288.5 L606.6 291.4 L606.3 294.3 L606.0 297.2 L605.8 300.1 L605.7 303.0 L605.7 305.9 L605.7 308.8 L605.8 311.8 L605.9 314.7 L606.2 317.6 L606.5 320.5 L606.8 323.4 L607.3 326.3 L607.8 329.2 L608.4 332.1 L609.1 335.0 L609.8 337.9 L610.6 340.8 L611.5 343.7 L612.4 346.6 L613.4 349.5 L614.5 352.4 L615.7 355.3 L616.9 358.2 L618.2 361.1 L619.5 364.1 L621.0 367.0 L622.5 369.9 L624.0 372.8 L625.7 375.7 L627.4 378.6 L629.1 381.5 L631.0 384.4 L632.9 387.3 L634.8 390.2 L636.9 393.1 L638.9 396.0 L641.1 398.9"/>
<path d="M781.6 333.2 L779.8 335.4 L778.0 337.6 L776.3 339.9 L774.5 342.1 L772.8 344.3 L771.1 346.6 L769.5 348.8 L767.8 351.0 L766.2 353.2 L764.6 355.4 L763.0 357.6 L761.4 359.8 L759.8 362.0 L758.3 364.2 L756.8 366.4 L755.3 368.6 L753.8 370.8 L752.3 373.0 L750.9 375.1 L749.4 377.3 L748.0 379.4 L746.6 381.6 L745.3 383.7 L743.9 385.9 L742.6 388.0 L741.2 390.1 L739.9 392.2 L738.7 394.3 L737.4 396.4 L736.1 398.5 L734.9 400.6 L733.7 402.6 L732.5 404.7 L731.3 406.7 L730.1 408.7 L729.0 410.7 L727.8 412.7 L726.7 414.7 L725.6 416.7"/>
<path d="M938.7 388.4 L935.8 389.2 L933.0 390.0 L930.1 390.8 L927.2 391.6 L924.4 392.4 L921.5 393.1 L918.7 393.9 L915.8 394.6 L912.9 395.3 L910.1 395.9 L907.2 396.6 L904.4 397.2 L901.5 397.9 L898.6 398.5 L895.8 399.1 L892.9 399.6 L890.1 400.2 L887.2 400.7 L884.3 401.2 L881.5 401.7 L878.6 402.1 L875.7 402.6 L872.9 403.0 L870.0 403.4 L867.1 403.8 L864.3 404.1 L861.4 404.4 L858.5 404.8 L855.6 405.0 L852.8 405.3 L849.9 405.6 L847.0 405.8 L844.1 406.0 L841.2 406.2 L838.3 406.3 L835.4 406.4 L832.5 406.5 L829.6 406.6 L826.7 406.7"/>
<path d="M881.1 420.7 L878.3 421.5 L875.6 422.2 L872.8 422.9 L870.0 423.6 L867.3 424.3 L864.5 424.9 L861.7 425.6 L858.9 426.1 L856.1 426.7 L853.3 427.2 L850.5 427.7 L847.7 428.2 L844.9 428.6 L842.1 429.0 L839.3 429.4 L836.5 429.8 L833.7 430.1 L830.8 430.4 L828.0 430.6 L825.1 430.9 L822.3 431.1 L819.4 431.2 L816.5 431.4 L813.6 431.5 L810.7 431.6 L807.8 431.6 L804.9 431.6 L802.0 431.6 L799.0 431.6 L796.1 431.5 L793.1 431.4 L790.1 431.2 L787.1 431.1 L784.1 430.9 L781.1 430.6 L778.1 430.4 L775.0 430.1 L772.0 429.8 L768.9 429.4"/>
<path d="M887.3 431.5 L884.4 432.1 L881.6 432.7 L878.8 433.2 L875.9 433.7 L873.1 434.2 L870.3 434.6 L867.4 435.0 L864.6 435.4 L861.7 435.8 L858.9 436.1 L856.0 436.4 L853.1 436.6 L850.3 436.8 L847.4 437.0 L844.5 437.2 L841.6 437.3 L838.7 437.4 L835.8 437.5 L832.9 437.5 L829.9 437.5 L827.0 437.4 L824.0 437.4 L821.1 437.2 L818.1 437.1 L815.1 436.9 L812.1 436.7 L809.1 436.5 L806.1 436.2 L803.1 435.9 L800.1 435.6 L797.0 435.2 L794.0 434.8 L790.9 434.4 L787.8 433.9 L784.7 433.4 L781.6 432.9 L778.5 432.3 L775.3 431.7 L772.2 431.1"/>
<path d="M796.3 335.6 L796.3 338.6 L796.2 341.5 L796.2 344.4 L796.2 347.3 L796.3 350.2 L796.4 353.2 L796.5 356.1 L796.6 359.0 L796.7 361.9 L796.9 364.8 L797.1 367.7 L797.3 370.7 L797.6 373.6 L797.9 376.5 L798.2 379.4 L798.5 382.3 L798.8 385.3 L799.2 388.2 L799.6 391.1 L800.1 394.0 L800.5 396.9 L801.0 399.8 L801.5 402.8 L802.0 405.7 L802.6 408.6 L803.2 411.5 L803.8 414.4 L804.4 417.3 L805.0 420.3 L805.7 423.2 L806.4 426.1 L807.1 429.0 L807.9 431.9 L808.6 434.8 L809.4 437.7 L810.2 440.7 L811.1 443.6 L811.9 446.5 L812.8 449.4"/>
<path d="M782.3 364.7 L781.0 367.1 L779.8 369.5 L778.5 371.9 L777.3 374.3 L776.1 376.7 L774.9 379.1 L773.7 381.5 L772.6 383.8 L771.5 386.2 L770.4 388.6 L769.3 390.9 L768.2 393.3 L767.2 395.6 L766.1 397.9 L765.1 400.3 L764.1 402.6 L763.2 404.9 L762.2 407.2 L761.3 409.5 L760.4 411.8 L759.5 414.0 L758.6 416.3 L757.7 418.6 L756.9 420.8 L756.0 423.0 L755.2 425.3 L754.4 427.5 L753.6 429.7 L752.8 431.8 L752.1 434.0 L751.3 436.2 L750.6 438.3 L749.8 440.4 L749.1 442.5 L748.4 444.6 L747.7 446.7 L747.0 448.8 L746.3 450.8 L745.6 452.8"/>
<path d="M729.1 332.3 L727.8 334.9 L726.6 337.4 L725.4 340.0 L724.2 342.5 L723.1 345.0 L722.0 347.6 L720.9 350.1 L719.9 352.7 L718.9 355.2 L717.9 357.7 L717.0 360.3 L716.1 362.8 L715.2 365.3 L714.3 367.9 L713.5 370.4 L712.8 372.9 L712.0 375.4 L711.3 377.9 L710.7 380.4 L710.0 382.9 L709.4 385.4 L708.9 387.9 L708.3 390.4 L707.8 392.9 L707.3 395.4 L706.9 397.9 L706.5 400.3 L706.1 402.8 L705.8 405.3 L705.5 407.7 L705.2 410.1 L704.9 412.6 L704.7 415.0 L704.5 417.4 L704.3 419.8 L704.2 422.2 L704.1 424.6 L704.0 427.0 L703.9 429.4"/>
<path d="M672.6 334.4 L671.9 337.1 L671.3 339.9 L670.7 342.7 L670.2 345.4 L669.7 348.2 L669.3 351.0 L669.0 353.7 L668.6 356.5 L668.4 359.3 L668.2 362.0 L668.0 364.8 L667.9 367.5 L667.8 370.3 L667.8 373.0 L667.9 375.8 L668.0 378.5 L668.1 381.3 L668.3 384.0 L668.5 386.8 L668.8 389.5 L669.2 392.3 L669.5 395.0 L670.0 397.8 L670.5 400.5 L671.0 403.2 L671.6 405.9 L672.2 408.7 L672.9 411.4 L673.6 414.1 L674.4 416.8 L675.2 419.5 L676.1 422.3 L677.0 425.0 L677.9 427.7 L678.9 430.4 L679.9 433.1 L681.0 435.7 L682.1 438.4 L683.3 441.1"/>
<path d="M798.1 406.6 L796.4 408.5 L794.7 410.3 L792.9 412.1 L791.2 414.0 L789.5 415.8 L787.8 417.5 L786.1 419.3 L784.4 421.1 L782.7 422.8 L781.0 424.5 L779.3 426.2 L777.6 427.9 L776.0 429.5 L774.3 431.1 L772.6 432.7 L770.9 434.3 L769.2 435.9 L767.5 437.4 L765.8 439.0 L764.1 440.5 L762.4 441.9 L760.7 443.4 L759.0 444.8 L757.3 446.2 L755.5 447.5 L753.8 448.9 L752.0 450.1 L750.2 451.4 L748.4 452.7 L746.6 453.9 L744.8 455.0 L743.0 456.2 L741.1 457.3 L739.2 458.3 L737.3 459.4 L735.4 460.4 L733.4 461.3 L731.4 462.2 L729.4 463.1"/>
<path d="M856.3 453.6 L853.9 454.9 L851.6 456.2 L849.3 457.5 L846.9 458.7 L844.6 459.9 L842.2 461.0 L839.9 462.1 L837.5 463.2 L835.1 464.2 L832.7 465.2 L830.3 466.1 L827.8 467.0 L825.4 467.9 L822.9 468.7 L820.5 469.5 L818.0 470.2 L815.5 470.9 L812.9 471.6 L810.4 472.2 L807.8 472.7 L805.2 473.2 L802.5 473.7 L799.9 474.1 L797.2 474.4 L794.5 474.8 L791.7 475.0 L789.0 475.2 L786.2 475.4 L783.3 475.5 L780.4 475.6 L777.5 475.6 L774.6 475.6 L771.6 475.5 L768.5 475.3 L765.5 475.1 L762.4 474.9 L759.2 474.6 L756.0 474.3 L752.8 473.9"/>
<path d="M559.8 408.5 L563.4 411.3 L567.1 414.0 L570.9 416.8 L574.7 419.5 L578.6 422.2 L582.6 424.9 L586.6 427.7 L590.7 430.4 L594.8 433.1 L599.0 435.8 L603.3 438.5 L607.6 441.2 L612.0 443.9 L616.4 446.6 L620.9 449.3 L625.5 451.9 L630.0 454.6 L634.7 457.3 L639.3 459.9 L644.1 462.6 L648.8 465.2 L653.6 467.8 L658.5 470.5 L663.3 473.1 L668.2 475.7 L673.2 478.3 L678.1 480.8 L683.1 483.4 L688.1 486.0 L693.2 488.5 L698.2 491.0 L703.3 493.5 L708.3 496.0 L713.4 498.5 L718.5 501.0 L723.6 503.4 L728.7 505.8 L733.8 508.2 L738.9 510.6"/>
<path d="M703.5 374.9 L704.4 377.8 L705.3 380.7 L706.2 383.7 L707.2 386.6 L708.3 389.5 L709.4 392.4 L710.5 395.4 L711.7 398.3 L713.0 401.2 L714.3 404.1 L715.6 407.1 L717.0 410.0 L718.4 412.9 L719.9 415.8 L721.4 418.8 L722.9 421.7 L724.5 424.6 L726.2 427.5 L727.9 430.4 L729.6 433.4 L731.4 436.3 L733.2 439.2 L735.1 442.1 L737.0 445.1 L738.9 448.0 L740.9 450.9 L742.9 453.8 L744.9 456.8 L747.0 459.7 L749.2 462.6 L751.3 465.5 L753.6 468.4 L755.8 471.4 L758.1 474.3 L760.4 477.2 L762.7 480.1 L765.1 483.1 L767.5 486.0 L770.0 488.9"/>
<path d="M834.5 376.0 L832.6 378.0 L830.7 380.0 L828.9 382.0 L827.0 384.0 L825.2 386.0 L823.3 388.0 L821.5 390.0 L819.7 392.0 L817.9 393.9 L816.1 395.9 L814.3 397.8 L812.5 399.7 L810.7 401.7 L808.9 403.6 L807.1 405.4 L805.4 407.3 L803.6 409.2 L801.9 411.0 L800.1 412.9 L798.4 414.7 L796.6 416.5 L794.9 418.3 L793.2 420.0 L791.4 421.8 L789.7 423.5 L788.0 425.2 L786.3 426.9 L784.6 428.6 L782.9 430.3 L781.1 431.9 L779.4 433.5 L777.7 435.1 L776.0 436.7 L774.3 438.2 L772.5 439.8 L770.8 441.3 L769.1 442.7 L767.3 444.2 L765.6 445.6"/>
<path d="M462.0 434.9 L467.6 437.7 L473.2 440.5 L478.9 443.3 L484.7 446.1 L490.6 448.9 L496.6 451.7 L502.7 454.4 L508.8 457.2 L515.1 460.0 L521.4 462.7 L527.8 465.5 L534.2 468.3 L540.7 471.0 L547.3 473.8 L554.0 476.5 L560.7 479.2 L567.5 482.0 L574.3 484.7 L581.2 487.4 L588.1 490.1 L595.1 492.8 L602.1 495.5 L609.2 498.1 L616.3 500.8 L623.4 503.5 L630.6 506.1 L637.7 508.7 L644.9 511.3 L652.2 513.9 L659.4 516.5 L666.6 519.1 L673.9 521.6 L681.1 524.1 L688.3 526.6 L695.5 529.1 L702.6 531.6 L709.8 534.0 L716.9 536.4 L723.9 538.7"/>
<path d="M820.8 516.3 L821.3 518.9 L821.9 521.4 L822.5 523.9 L823.1 526.4 L823.6 528.9 L824.2 531.4 L824.7 533.8 L825.3 536.2 L825.8 538.6 L826.3 540.9 L826.7 543.1 L827.1 545.4 L827.5 547.6 L827.8 549.7 L828.1 551.7 L828.2 553.7 L828.4 555.6 L828.4 557.5 L828.3 559.2 L828.0 560.8 L827.6 562.3 L827.1 563.7 L826.3 565.0 L825.4 566.1 L824.2 567.1 L822.7 567.9 L821.0 568.6 L818.9 569.0 L816.5 569.3 L813.8 569.4 L810.6 569.3 L807.1 569.0 L803.2 568.5 L798.9 567.8 L794.3 567.0 L789.3 566.0 L783.9 564.9 L778.2 563.6 L772.2 562.2"/>
<path d="M730.6 422.5 L732.8 425.4 L735.0 428.3 L737.3 431.1 L739.6 434.0 L742.0 436.9 L744.4 439.7 L746.8 442.6 L749.3 445.4 L751.8 448.3 L754.3 451.1 L756.9 454.0 L759.5 456.8 L762.1 459.7 L764.8 462.5 L767.5 465.4 L770.2 468.2 L773.0 471.1 L775.8 473.9 L778.6 476.7 L781.4 479.6 L784.3 482.4 L787.2 485.2 L790.1 488.0 L793.0 490.8 L796.0 493.6 L798.9 496.4 L801.9 499.2 L804.9 502.0 L808.0 504.8 L811.0 507.6 L814.1 510.4 L817.1 513.1 L820.2 515.9 L823.3 518.6 L826.4 521.4 L829.5 524.1 L832.7 526.8 L835.8 529.5 L838.9 532.2"/>
<path d="M808.2 458.8 L809.4 461.8 L810.8 464.7 L812.1 467.6 L813.4 470.5 L814.8 473.5 L816.2 476.4 L817.6 479.3 L819.0 482.2 L820.5 485.2 L822.0 488.1 L823.5 491.0 L825.0 493.9 L826.5 496.8 L828.1 499.8 L829.6 502.7 L831.2 505.6 L832.8 508.5 L834.5 511.5 L836.1 514.4 L837.8 517.3 L839.4 520.2 L841.1 523.2 L842.8 526.1 L844.5 529.0 L846.3 531.9 L848.0 534.9 L849.8 537.8 L851.5 540.7 L853.3 543.6 L855.1 546.5 L856.9 549.5 L858.7 552.4 L860.6 555.3 L862.4 558.2 L864.2 561.1 L866.1 564.1 L868.0 567.0 L869.8 569.9 L871.7 572.8"/>
<path d="M660.7 468.2 L662.4 470.7 L664.2 473.1 L666.0 475.6 L667.8 478.0 L669.7 480.5 L671.5 482.9 L673.4 485.3 L675.3 487.7 L677.1 490.0 L679.0 492.4 L680.9 494.7 L682.8 497.0 L684.7 499.2 L686.5 501.5 L688.4 503.7 L690.2 505.9 L692.0 508.0 L693.7 510.1 L695.5 512.2 L697.2 514.3 L698.8 516.3 L700.4 518.2 L701.9 520.1 L703.3 522.0 L704.6 523.8 L705.9 525.6 L707.0 527.3 L708.1 528.9 L709.0 530.5 L709.7 532.0 L710.4 533.4 L710.8 534.7 L711.1 536.0 L711.2 537.2 L711.1 538.3 L710.7 539.3 L710.2 540.2 L709.4 541.0 L708.3 541.7"/>
<path d="M660.9 350.4 L662.7 348.8 L664.5 347.3 L666.3 345.7 L668.1 344.1 L669.9 342.6 L671.8 341.0 L673.6 339.4 L675.5 337.8 L677.4 336.2 L679.3 334.7 L681.3 333.1 L683.2 331.5 L685.2 329.9 L687.1 328.3 L689.1 326.7 L691.1 325.1 L693.2 323.5 L695.2 321.9 L697.3 320.3 L699.3 318.7 L701.4 317.1 L703.5 315.6 L705.6 314.0 L707.8 312.4 L709.9 310.8 L712.0 309.2 L714.2 307.6 L716.4 306.0 L718.6 304.4 L720.8 302.8 L723.0 301.3 L725.3 299.7 L727.5 298.1 L729.8 296.5 L732.0 295.0 L734.3 293.4 L736.6 291.8 L738.9 290.3 L741.2 288.7 L743.6 287.2 L745.9 285.6 L748.2 284.1 L750.6 282.5 L753.0 281.0 L755.3 279.5 L757.7 277.9 L760.1 276.4 L762.5 274.9 L764.9 273.4 L767.3 271.9 L769.8 270.4 L772.2 268.9 L774.6 267.5 L777.1 266.0 L779.5 264.5 L782.0 263.1 L784.4 261.6 L786.9 260.2 L789.4 258.7 L791.9 257.3 L794.3 255.9 L796.8 254.5 L799.3 253.1 L801.8 251.7 L804.3 250.3 L806.8 249.0 L809.3 247.6 L811.8 246.3 L814.3 244.9 L816.8 243.6 L819.4 242.3 L821.9 241.0 L824.4 239.7 L826.9 238.4 L829.4 237.2 L831.9 235.9 L834.5 234.7 L837.0 233.5 L839.5 232.3 L842.0 231.1 L844.5 229.9 L847.1 228.7 L849.6 227.6 L852.1 226.5 L854.6 225.4 L857.1 224.3 L859.6 223.2 L862.2 222.1 L864.7 221.1 L867.2 220.0 L869.7 219.0 L872.2 218.1 L874.7 217.1 L877.2 216.1 L879.7 215.2 L882.3 214.3 L884.8 213.4 L887.3 212.5 L889.8 211.7 L892.3 210.9 L894.8 210.0 L897.3 209.3 L899.8 208.5 L902.3 207.8 L904.8 207.1 L907.3 206.4 L909.8 205.7 L912.3 205.1 L914.8 204.4 L917.3 203.8 L919.8 203.3 L922.3 202.7 L924.8 202.2 L927.4 201.7 L929.9 201.2 L932.4 200.8 L934.9 200.4 L937.4 200.0 L940.0 199.6"/>
<path d="M713.6 449.5 L714.7 447.8 L715.8 446.0 L717.0 444.2 L718.1 442.5 L719.2 440.6 L720.3 438.8 L721.5 436.9 L722.6 435.0 L723.7 433.1 L724.9 431.2 L726.0 429.2 L727.2 427.3 L728.3 425.3 L729.5 423.3 L730.7 421.2 L731.9 419.2 L733.1 417.1 L734.3 415.1 L735.5 413.0 L736.7 410.9 L738.0 408.7 L739.3 406.6 L740.5 404.5 L741.8 402.3 L743.2 400.1 L744.5 397.9 L745.9 395.7 L747.2 393.5 L748.6 391.3 L750.0 389.1 L751.5 386.9 L752.9 384.6 L754.4 382.4 L755.9 380.1 L757.4 377.8 L758.9 375.6 L760.4 373.3 L762.0 371.0 L763.6 368.7 L765.2 366.4 L766.8 364.1 L768.4 361.8 L770.1 359.5 L771.8 357.1 L773.5 354.8 L775.2 352.5 L777.0 350.2 L778.7 347.8 L780.5 345.5 L782.3 343.1 L784.1 340.8 L785.9 338.4 L787.8 336.1 L789.7 333.7 L791.6 331.4 L793.5 329.0 L795.4 326.7 L797.3 324.3 L799.3 322.0 L801.3 319.6 L803.2 317.3 L805.3 314.9 L807.3 312.5 L809.3 310.2 L811.4 307.8 L813.4 305.5 L815.5 303.1 L817.6 300.8 L819.7 298.4 L821.8 296.1 L824.0 293.7 L826.1 291.4 L828.3 289.1 L830.4 286.7 L832.6 284.4 L834.8 282.1 L837.0 279.8 L839.2 277.5 L841.4 275.2 L843.7 272.9 L845.9 270.6 L848.1 268.3 L850.4 266.0 L852.6 263.7 L854.9 261.4 L857.2 259.2 L859.5 256.9 L861.7 254.7 L864.0 252.4 L866.3 250.2 L868.6 248.0 L870.9 245.8 L873.2 243.6 L875.5 241.4 L877.8 239.2 L880.2 237.0 L882.5 234.9 L884.8 232.8 L887.1 230.6 L889.4 228.5 L891.7 226.4 L894.1 224.3 L896.4 222.3 L898.7 220.2 L901.0 218.2 L903.4 216.2 L905.7 214.2 L908.0 212.2 L910.3 210.2 L912.7 208.3 L915.0 206.4 L917.3 204.5 L919.6 202.6 L922.0 200.7 L924.3 198.9 L926.6 197.1 L928.9 195.3 L931.2 193.6 L933.6 191.9"/>
<path d="M696.1 431.0 L697.8 429.5 L699.5 428.0 L701.2 426.4 L702.9 424.9 L704.6 423.3 L706.3 421.7 L708.0 420.0 L709.7 418.4 L711.4 416.7 L713.1 415.0 L714.8 413.2 L716.5 411.5 L718.2 409.7 L719.9 407.9 L721.7 406.1 L723.4 404.3 L725.2 402.4 L726.9 400.6 L728.7 398.7 L730.5 396.8 L732.3 394.9 L734.1 393.0 L735.9 391.0 L737.7 389.1 L739.6 387.1 L741.4 385.1 L743.3 383.1 L745.2 381.1 L747.1 379.1 L749.0 377.1 L750.9 375.1 L752.9 373.0 L754.8 371.0 L756.8 368.9 L758.8 366.9 L760.8 364.8 L762.9 362.7 L764.9 360.6 L767.0 358.5 L769.0 356.4 L771.1 354.3 L773.2 352.2 L775.4 350.1 L777.5 348.0 L779.7 345.8 L781.8 343.7 L784.0 341.6 L786.2 339.4 L788.4 337.3 L790.7 335.1 L792.9 333.0 L795.2 330.8 L797.5 328.7 L799.8 326.5 L802.1 324.4 L804.4 322.2 L806.7 320.1 L809.1 317.9 L811.4 315.8 L813.8 313.6 L816.2 311.5 L818.5 309.3 L820.9 307.2 L823.4 305.0 L825.8 302.9 L828.2 300.7 L830.7 298.6 L833.1 296.5 L835.6 294.3 L838.0 292.2 L840.5 290.1 L843.0 288.0 L845.5 285.9 L848.0 283.7 L850.5 281.6 L853.0 279.5 L855.5 277.5 L858.0 275.4 L860.6 273.3 L863.1 271.2 L865.6 269.2 L868.2 267.1 L870.7 265.1 L873.3 263.1 L875.8 261.1 L878.4 259.0 L880.9 257.1 L883.5 255.1 L886.1 253.1 L888.6 251.1 L891.2 249.2 L893.7 247.3 L896.3 245.3 L898.9 243.4 L901.4 241.5 L904.0 239.7 L906.6 237.8 L909.1 236.0 L911.7 234.1 L914.2 232.3 L916.8 230.6 L919.4 228.8 L921.9 227.0 L924.5 225.3 L927.0 223.6 L929.6 221.9 L932.2 220.3 L934.7 218.6 L937.3 217.0 L939.8 215.4 L942.4 213.9 L945.0 212.3 L947.5 210.8 L950.1 209.3 L952.7 207.9 L955.2 206.5 L957.8 205.1 L960.4 203.7 L963.0 202.4"/>
<path d="M711.5 431.3 L713.8 430.1 L716.1 428.8 L718.4 427.5 L720.6 426.1 L722.8 424.7 L725.1 423.3 L727.3 421.9 L729.5 420.4 L731.7 418.9 L733.9 417.3 L736.1 415.8 L738.3 414.2 L740.5 412.6 L742.7 410.9 L744.9 409.3 L747.2 407.6 L749.4 405.9 L751.6 404.1 L753.8 402.4 L756.0 400.6 L758.3 398.8 L760.5 397.0 L762.7 395.1 L765.0 393.3 L767.2 391.4 L769.5 389.5 L771.8 387.6 L774.1 385.7 L776.4 383.8 L778.7 381.8 L781.0 379.9 L783.3 377.9 L785.7 375.9 L788.0 373.9 L790.4 371.9 L792.8 369.8 L795.1 367.8 L797.5 365.8 L800.0 363.7 L802.4 361.6 L804.8 359.6 L807.2 357.5 L809.7 355.4 L812.2 353.3 L814.6 351.2 L817.1 349.1 L819.6 347.0 L822.1 344.9 L824.6 342.7 L827.2 340.6 L829.7 338.5 L832.2 336.3 L834.8 334.2 L837.4 332.1 L839.9 329.9 L842.5 327.8 L845.1 325.6 L847.7 323.5 L850.3 321.3 L852.9 319.2 L855.5 317.0 L858.1 314.9 L860.8 312.7 L863.4 310.6 L866.0 308.4 L868.7 306.3 L871.3 304.2 L874.0 302.0 L876.6 299.9 L879.3 297.8 L881.9 295.6 L884.6 293.5 L887.3 291.4 L889.9 289.3 L892.6 287.2 L895.3 285.1 L897.9 283.0 L900.6 280.9 L903.3 278.9 L906.0 276.8 L908.6 274.7 L911.3 272.7 L914.0 270.7 L916.6 268.6 L919.3 266.6 L922.0 264.6 L924.6 262.6 L927.3 260.7 L930.0 258.7 L932.6 256.7 L935.3 254.8 L937.9 252.9 L940.6 251.0 L943.2 249.1 L945.9 247.2 L948.5 245.4 L951.1 243.5 L953.8 241.7 L956.4 239.9 L959.0 238.2 L961.7 236.4 L964.3 234.7 L966.9 233.0 L969.5 231.3 L972.2 229.6 L974.8 228.0 L977.4 226.4 L980.0 224.8 L982.7 223.2 L985.3 221.7 L987.9 220.2 L990.6 218.7 L993.2 217.3 L995.8 215.8 L998.5 214.5 L1001.1 213.1 L1003.8 211.8 L1006.4 210.5 L1009.1 209.3"/>
<path d="M736.8 393.1 L739.0 391.9 L741.3 390.6 L743.5 389.3 L745.8 388.0 L748.0 386.7 L750.3 385.4 L752.5 384.1 L754.8 382.7 L757.1 381.4 L759.4 380.0 L761.6 378.6 L763.9 377.2 L766.2 375.8 L768.5 374.4 L770.8 372.9 L773.1 371.5 L775.4 370.0 L777.8 368.6 L780.1 367.1 L782.4 365.6 L784.8 364.1 L787.1 362.6 L789.4 361.1 L791.8 359.6 L794.2 358.1 L796.5 356.5 L798.9 355.0 L801.3 353.5 L803.7 351.9 L806.1 350.4 L808.5 348.8 L810.9 347.2 L813.3 345.7 L815.7 344.1 L818.1 342.5 L820.6 340.9 L823.0 339.3 L825.5 337.8 L827.9 336.2 L830.4 334.6 L832.8 333.0 L835.3 331.4 L837.7 329.8 L840.2 328.2 L842.7 326.5 L845.2 324.9 L847.7 323.3 L850.2 321.7 L852.6 320.1 L855.1 318.5 L857.6 316.9 L860.1 315.3 L862.7 313.7 L865.2 312.1 L867.7 310.5 L870.2 308.9 L872.7 307.3 L875.2 305.7 L877.8 304.1 L880.3 302.5 L882.8 300.9 L885.3 299.3 L887.9 297.7 L890.4 296.1 L892.9 294.6 L895.5 293.0 L898.0 291.4 L900.5 289.9 L903.0 288.3 L905.6 286.8 L908.1 285.2 L910.6 283.7 L913.2 282.2 L915.7 280.7 L918.2 279.1 L920.8 277.6 L923.3 276.1 L925.8 274.7 L928.3 273.2 L930.9 271.7 L933.4 270.2 L935.9 268.8 L938.4 267.4 L940.9 265.9 L943.5 264.5 L946.0 263.1 L948.5 261.7 L951.0 260.3 L953.5 258.9 L956.0 257.6 L958.5 256.2 L961.0 254.9 L963.5 253.6 L966.0 252.3 L968.5 251.0 L971.0 249.7 L973.5 248.5 L976.0 247.2 L978.5 246.0 L981.0 244.8 L983.5 243.6 L986.0 242.4 L988.5 241.2 L991.0 240.1 L993.5 239.0 L996.0 237.9 L998.5 236.8 L1001.0 235.7 L1003.5 234.7 L1006.0 233.7 L1008.6 232.7 L1011.1 231.7 L1013.6 230.7 L1016.1 229.8 L1018.6 228.9 L1021.2 228.0 L1023.7 227.1 L1026.2 226.2 L1028.8 225.4"/>
<path d="M669.2 518.9 L679.3 522.5 L689.4 526.1 L699.5 529.6 L709.5 533.1 L719.4 536.6 L729.3 539.9 L739.1 543.2 L748.7 546.4 L758.1 549.5 L767.3 552.5 L776.3 555.3 L785.0 558.0 L793.3 560.5 L801.3 562.8 L808.8 564.9 L815.8 566.7 L822.3 568.2 L828.3 569.4 L833.7 570.3 L838.5 570.8 L842.7 570.8 L846.4 570.5 L849.6 569.9 L852.4 568.8 L854.9 567.4 L857.0 565.8 L858.9 563.8 L860.6 561.6 L862.1 559.2 L863.5 556.5 L864.7 553.8 L865.9 550.8 L867.1 547.8 L868.2 544.6 L869.3 541.4 L870.3 538.1 L871.3 534.7 L872.3 531.2 L873.3 527.7 L874.3 524.2 L875.3 520.5 L876.3 516.9 L877.3 513.2 L878.3 509.5 L879.3 505.8 L880.3 502.0 L881.4 498.3 L882.4 494.5 L883.4 490.7 L884.4 486.8 L885.5 483.0 L886.5 479.1 L887.6 475.2 L888.6 471.4 L889.7 467.5 L890.7 463.6 L891.8 459.7 L892.9 455.7 L894.0 451.8 L895.0 447.9 L896.1 443.9 L897.2 440.0 L898.3 436.0 L899.4 432.1 L900.5 428.1 L901.6 424.2 L902.7 420.2 L903.8 416.2 L904.9 412.2 L905.9 408.3 L907.0 404.3 L908.1 400.3 L909.2 396.3 L910.3 392.3 L911.4 388.3 L912.4 384.3 L913.5 380.3 L914.6 376.3 L915.6 372.3 L916.7 368.3 L917.7 364.3 L918.8 360.3 L919.8 356.3 L920.8 352.3 L921.8 348.3 L922.8 344.3 L923.8 340.3 L924.8 336.3 L925.8 332.3 L926.8 328.3 L927.7 324.2 L928.7 320.2 L929.6 316.2 L930.5 312.2 L931.4 308.2 L932.3 304.2 L933.2 300.2 L934.1 296.2 L934.9 292.2 L935.7 288.2 L936.6 284.2 L937.4 280.1 L938.2 276.1 L938.9 272.1 L939.7 268.1 L940.4 264.1 L941.1 260.1 L941.8 256.1 L942.5 252.1 L943.2 248.2 L943.8 244.2 L944.5 240.2 L945.1 236.2 L945.7 232.2 L946.2 228.2 L946.8 224.3 L947.3 220.3 L947.8 216.3 L948.3 212.3"/>
<path d="M868.0 447.3 L869.9 446.0 L871.8 444.7 L873.7 443.4 L875.6 442.1 L877.5 440.7 L879.4 439.3 L881.3 438.0 L883.2 436.6 L885.1 435.1 L887.0 433.7 L888.9 432.2 L890.8 430.8 L892.7 429.3 L894.6 427.8 L896.5 426.3 L898.4 424.8 L900.3 423.3 L902.2 421.7 L904.1 420.2 L906.0 418.6 L907.9 417.0 L909.8 415.5 L911.7 413.9 L913.6 412.2 L915.5 410.6 L917.4 409.0 L919.3 407.4 L921.2 405.7 L923.1 404.1 L925.0 402.4 L926.9 400.7 L928.8 399.1 L930.7 397.4 L932.6 395.7 L934.5 394.0 L936.4 392.3 L938.3 390.6 L940.1 388.9 L942.0 387.1 L943.9 385.4 L945.8 383.7 L947.6 381.9 L949.5 380.2 L951.4 378.4 L953.2 376.7 L955.1 374.9 L956.9 373.1 L958.8 371.4 L960.6 369.6 L962.4 367.8 L964.3 366.0 L966.1 364.2 L967.9 362.4 L969.7 360.6 L971.5 358.8 L973.3 357.0 L975.1 355.2 L976.9 353.4 L978.7 351.6 L980.5 349.8 L982.3 348.0 L984.0 346.2 L985.8 344.3 L987.5 342.5 L989.2 340.7 L991.0 338.9 L992.7 337.0 L994.4 335.2 L996.1 333.4 L997.8 331.6 L999.5 329.7 L1001.2 327.9 L1002.8 326.1 L1004.5 324.2 L1006.1 322.4 L1007.8 320.6 L1009.4 318.7 L1011.0 316.9 L1012.6 315.1 L1014.2 313.2 L1015.8 311.4 L1017.4 309.6 L1018.9 307.7 L1020.5 305.9 L1022.0 304.1 L1023.6 302.3 L1025.1 300.4 L1026.6 298.6 L1028.1 296.8 L1029.6 295.0 L1031.0 293.1 L1032.5 291.3 L1033.9 289.5 L1035.4 287.7 L1036.8 285.9 L1038.2 284.1 L1039.6 282.3 L1041.0 280.5 L1042.3 278.7 L1043.7 276.9 L1045.1 275.1 L1046.4 273.3 L1047.7 271.5 L1049.0 269.8 L1050.3 268.0 L1051.6 266.2 L1052.9 264.5 L1054.1 262.7 L1055.4 260.9 L1056.6 259.2 L1057.9 257.4 L1059.1 255.7 L1060.3 254.0 L1061.5 252.2 L1062.6 250.5 L1063.8 248.8 L1065.0 247.1 L1066.1 245.4 L1067.2 243.7"/>
<path d="M826.7 406.8 L829.8 406.8 L833.0 406.7 L836.1 406.6 L839.2 406.4 L842.3 406.3 L845.4 406.1 L848.4 405.8 L851.5 405.6 L854.6 405.3 L857.7 405.0 L860.8 404.7 L863.9 404.4 L866.9 404.0 L870.0 403.6 L873.1 403.2 L876.1 402.7 L879.2 402.3 L882.3 401.8 L885.3 401.3 L888.4 400.7 L891.4 400.1 L894.5 399.6 L897.6 399.0 L900.6 398.3 L903.7 397.7 L906.7 397.0 L909.8 396.3 L912.9 395.6 L915.9 394.8 L919.0 394.1 L922.0 393.3 L925.1 392.5 L928.2 391.7 L931.2 390.8 L934.3 390.0 L937.4 389.1 L940.4 388.2 L943.5 387.3 L946.6 386.3 L949.6 385.4 L952.7 384.4 L955.8 383.4 L958.8 382.4 L961.9 381.4 L965.0 380.4 L968.0 379.3 L971.1 378.2 L974.2 377.2 L977.2 376.1 L980.3 375.0 L983.4 373.8 L986.4 372.7 L989.5 371.5 L992.5 370.4 L995.6 369.2 L998.7 368.0 L1001.7 366.8 L1004.8 365.6 L1007.8 364.4 L1010.8 363.2 L1013.9 361.9 L1016.9 360.7 L1020.0 359.4 L1023.0 358.1 L1026.0 356.8 L1029.0 355.6 L1032.0 354.3 L1035.1 353.0 L1038.1 351.6 L1041.1 350.3 L1044.1 349.0 L1047.0 347.7 L1050.0 346.3 L1053.0 345.0 L1056.0 343.6 L1058.9 342.3 L1061.9 340.9 L1064.8 339.5 L1067.7 338.2 L1070.7 336.8 L1073.6 335.4 L1076.5 334.0 L1079.4 332.7 L1082.3 331.3 L1085.1 329.9 L1088.0 328.5 L1090.9 327.1 L1093.7 325.7 L1096.6 324.3 L1099.4 322.9 L1102.2 321.5 L1105.0 320.1 L1107.8 318.7 L1110.6 317.3 L1113.3 315.9 L1116.1 314.5 L1118.8 313.1 L1121.6 311.7 L1124.3 310.3 L1127.0 308.9 L1129.7 307.6 L1132.4 306.2 L1135.1 304.8 L1137.7 303.4 L1140.4 302.0 L1143.0 300.7 L1145.6 299.3 L1148.2 297.9 L1150.8 296.6 L1153.4 295.2 L1156.0 293.9 L1158.6 292.6 L1161.1 291.2 L1163.7 289.9 L1166.2 288.6 L1168.7 287.3 L1171.2 286.0 L1173.7 284.7 L1176.2 283.4"/>
<path d="M650.7 280.7 L653.0 280.1 L655.2 279.6 L657.5 279.0 L659.8 278.4 L662.1 277.9 L664.4 277.3 L666.6 276.8 L668.9 276.2 L671.2 275.7 L673.5 275.2 L675.8 274.6 L678.1 274.1 L680.3 273.6 L682.6 273.1 L684.9 272.6 L687.2 272.1 L689.5 271.6 L691.7 271.2 L694.0 270.7 L696.3 270.2 L698.6 269.8 L700.9 269.3 L703.1 268.9 L705.4 268.4 L707.7 268.0 L710.0 267.6 L712.2 267.2 L714.5 266.7 L716.8 266.3 L719.1 265.9 L721.3 265.6 L723.6 265.2 L725.8 264.8 L728.1 264.4 L730.4 264.1 L732.6 263.7 L734.9 263.4 L737.1 263.1 L739.4 262.7 L741.7 262.4 L743.9 262.1 L746.2 261.8 L748.4 261.5 L750.6 261.2 L752.9 260.9 L755.1 260.7 L757.4 260.4 L759.6 260.2 L761.9 259.9 L764.1 259.7 L766.3 259.5 L768.5 259.2 L770.8 259.0 L773.0 258.8 L775.2 258.6 L777.5 258.5 L779.7 258.3 L781.9 258.1 L784.1 258.0 L786.3 257.8 L788.5 257.7 L790.8 257.5 L793.0 257.4 L795.2 257.3 L797.4 257.2 L799.6 257.1 L801.8 257.0 L804.0 256.9 L806.2 256.9 L808.4 256.8 L810.6 256.8 L812.8 256.7 L815.0 256.7 L817.2 256.7 L819.3 256.7 L821.5 256.7 L823.7 256.7 L825.9 256.7 L828.1 256.7 L830.3 256.7 L832.5 256.8 L834.6 256.8 L836.8 256.9 L839.0 257.0 L841.2 257.0 L843.4 257.1 L845.5 257.2 L847.7 257.3 L849.9 257.4 L852.1 257.6 L854.2 257.7 L856.4 257.8 L858.6 258.0 L860.7 258.1 L862.9 258.3 L865.1 258.5 L867.2 258.7 L869.4 258.9 L871.6 259.1 L873.7 259.3 L875.9 259.5 L878.1 259.7 L880.2 260.0 L882.4 260.2 L884.6 260.5 L886.7 260.7 L888.9 261.0 L891.1 261.3 L893.2 261.6"/>
<path d="M846.4 477.6 L847.1 476.0 L847.8 474.4 L848.5 472.9 L849.2 471.3 L849.9 469.7 L850.6 468.1 L851.3 466.5 L852.0 464.9 L852.7 463.3 L853.4 461.6 L854.2 460.0 L854.9 458.4 L855.6 456.7 L856.3 455.1 L857.0 453.4 L857.8 451.8 L858.5 450.1 L859.2 448.4 L859.9 446.8 L860.7 445.1 L861.4 443.4 L862.2 441.7 L862.9 440.0 L863.6 438.3 L864.4 436.6 L865.1 434.9 L865.9 433.2 L866.7 431.5 L867.4 429.8 L868.2 428.1 L868.9 426.4 L869.7 424.6 L870.5 422.9 L871.2 421.2 L872.0 419.5 L872.8 417.7 L873.6 416.0 L874.3 414.2 L875.1 412.5 L875.9 410.8 L876.7 409.0 L877.5 407.3 L878.3 405.5 L879.1 403.7 L879.9 402.0 L880.7 400.2 L881.5 398.5 L882.3 396.7 L883.1 394.9 L883.9 393.2 L884.7 391.4 L885.5 389.6 L886.3 387.9 L887.1 386.1 L887.9 384.3 L888.7 382.6 L889.5 380.8 L890.3 379.0 L891.2 377.2 L892.0 375.4 L892.8 373.7 L893.6 371.9 L894.4 370.1 L895.3 368.3 L896.1 366.5 L896.9 364.7 L897.7 362.9 L898.5 361.2 L899.4 359.4 L900.2 357.6 L901.0 355.8 L901.8 354.0 L902.7 352.2 L903.5 350.4 L904.3 348.6 L905.1 346.8 L905.9 345.0 L906.8 343.2 L907.6 341.4 L908.4 339.6 L909.2 337.8 L910.0 336.0 L910.9 334.3 L911.7 332.5 L912.5 330.7 L913.3 328.9 L914.1 327.1 L914.9 325.3 L915.8 323.5 L916.6 321.7 L917.4 319.9 L918.2 318.1 L919.0 316.3 L919.8 314.5 L920.6 312.7 L921.4 310.9 L922.2 309.1 L923.0 307.3 L923.8 305.5 L924.6 303.7 L925.4 301.9 L926.2 300.1 L927.0 298.3 L927.8 296.5 L928.6 294.7 L929.3 292.9 L930.1 291.1 L930.9 289.3 L931.7 287.5 L932.4 285.8 L933.2 284.0 L934.0 282.2 L934.7 280.4 L935.5 278.6 L936.3 276.8 L937.0 275.0 L937.8 273.2 L938.5 271.4 L939.3 269.7"/>
<path d="M653.7 392.4 L657.8 394.2 L662.0 395.9 L666.2 397.6 L670.4 399.2 L674.6 400.9 L678.8 402.5 L683.0 404.1 L687.2 405.6 L691.4 407.2 L695.6 408.7 L699.8 410.1 L704.0 411.6 L708.2 413.0 L712.3 414.3 L716.5 415.7 L720.7 417.0 L724.8 418.2 L728.9 419.5 L733.0 420.7 L737.1 421.8 L741.2 422.9 L745.3 424.0 L749.3 425.0 L753.4 426.0 L757.4 426.9 L761.4 427.9 L765.4 428.7 L769.4 429.5 L773.3 430.3 L777.2 431.0 L781.1 431.7 L785.0 432.3 L788.9 432.9 L792.7 433.4 L796.6 433.9 L800.4 434.3 L804.2 434.7 L807.9 435.1 L811.7 435.3 L815.4 435.6 L819.2 435.8 L822.9 435.9 L826.6 436.0 L830.2 436.0 L833.9 436.0 L837.5 435.9 L841.2 435.8 L844.8 435.6 L848.4 435.4 L852.0 435.1 L855.6 434.8 L859.2 434.4 L862.8 434.0 L866.3 433.5 L869.9 432.9 L873.5 432.4 L877.0 431.7 L880.6 431.1 L884.1 430.4 L887.6 429.6 L891.2 428.8 L894.7 427.9 L898.3 427.0 L901.8 426.1 L905.3 425.1 L908.9 424.1 L912.4 423.0 L916.0 421.9 L919.5 420.8 L923.0 419.6 L926.6 418.4 L930.1 417.1 L933.7 415.8 L937.2 414.5 L940.8 413.1 L944.3 411.7 L947.9 410.3 L951.4 408.8 L955.0 407.3 L958.5 405.8 L962.1 404.2 L965.7 402.6 L969.2 401.0 L972.8 399.4 L976.3 397.7 L979.9 396.1 L983.4 394.3 L987.0 392.6 L990.5 390.8 L994.1 389.1 L997.6 387.3 L1001.1 385.4 L1004.7 383.6 L1008.2 381.7 L1011.7 379.9 L1015.2 378.0 L1018.7 376.1 L1022.2 374.1 L1025.7 372.2 L1029.1 370.2 L1032.6 368.3 L1036.0 366.3 L1039.5 364.3 L1042.9 362.3 L1046.3 360.2 L1049.7 358.2 L1053.0 356.2 L1056.4 354.1 L1059.7 352.0 L1063.1 350.0 L1066.4 347.9 L1069.6 345.8 L1072.9 343.7"/>
<path d="M660.3 426.6 L663.8 428.0 L667.3 429.3 L670.9 430.7 L674.4 432.0 L677.9 433.4 L681.4 434.6 L684.9 435.9 L688.4 437.2 L691.9 438.4 L695.4 439.6 L698.9 440.8 L702.3 441.9 L705.7 443.1 L709.2 444.2 L712.6 445.2 L716.0 446.3 L719.3 447.3 L722.7 448.3 L726.0 449.2 L729.4 450.2 L732.7 451.1 L736.0 452.0 L739.2 452.8 L742.5 453.6 L745.7 454.4 L748.9 455.1 L752.0 455.8 L755.2 456.5 L758.3 457.1 L761.4 457.7 L764.5 458.3 L767.6 458.8 L770.6 459.3 L773.7 459.8 L776.7 460.2 L779.6 460.6 L782.6 461.0 L785.5 461.3 L788.4 461.5 L791.3 461.8 L794.2 462.0 L797.0 462.1 L799.8 462.3 L802.6 462.3 L805.4 462.4 L808.2 462.4 L810.9 462.4 L813.6 462.3 L816.4 462.2 L819.0 462.0 L821.7 461.8 L824.4 461.6 L827.0 461.3 L829.7 461.0 L832.3 460.7 L834.9 460.3 L837.5 459.9 L840.1 459.4 L842.6 459.0 L845.2 458.4 L847.7 457.9 L850.3 457.3 L852.8 456.6 L855.3 456.0 L857.8 455.3 L860.4 454.5 L862.9 453.8 L865.4 453.0 L867.9 452.1 L870.4 451.3 L872.8 450.4 L875.3 449.5 L877.8 448.5 L880.3 447.5 L882.8 446.5 L885.2 445.5 L887.7 444.4 L890.2 443.3 L892.7 442.2 L895.1 441.0 L897.6 439.9 L900.1 438.7 L902.5 437.5 L905.0 436.2 L907.5 434.9 L910.0 433.7 L912.4 432.3 L914.9 431.0 L917.4 429.7 L919.8 428.3 L922.3 426.9 L924.8 425.5 L927.3 424.0 L929.7 422.6 L932.2 421.1 L934.7 419.6 L937.2 418.1 L939.6 416.6 L942.1 415.1 L944.6 413.5 L947.0 411.9 L949.5 410.4 L952.0 408.8 L954.4 407.2 L956.9 405.5 L959.4 403.9 L961.8 402.2 L964.3 400.6 L966.7 398.9 L969.2 397.2 L971.6 395.5 L974.1 393.8 L976.5 392.1 L978.9 390.4 L981.3 388.6 L983.8 386.9 L986.2 385.1 L988.6 383.4 L991.0 381.6"/>
<path d="M661.9 434.3 L666.2 436.2 L670.5 438.0 L674.9 439.8 L679.2 441.6 L683.5 443.3 L687.8 445.0 L692.1 446.7 L696.4 448.3 L700.6 449.9 L704.9 451.5 L709.1 453.0 L713.3 454.5 L717.5 455.9 L721.7 457.3 L725.8 458.7 L729.9 460.0 L734.0 461.3 L738.0 462.5 L742.0 463.7 L746.0 464.9 L749.9 465.9 L753.9 467.0 L757.7 468.0 L761.6 468.9 L765.4 469.8 L769.1 470.6 L772.8 471.4 L776.5 472.1 L780.2 472.8 L783.8 473.4 L787.4 474.0 L790.9 474.5 L794.4 474.9 L797.8 475.3 L801.2 475.6 L804.6 475.8 L808.0 476.0 L811.3 476.1 L814.6 476.2 L817.8 476.2 L821.0 476.1 L824.2 476.0 L827.4 475.8 L830.5 475.6 L833.6 475.2 L836.7 474.9 L839.7 474.4 L842.8 473.9 L845.8 473.4 L848.8 472.8 L851.8 472.1 L854.7 471.4 L857.7 470.6 L860.6 469.8 L863.5 468.9 L866.5 468.0 L869.4 467.0 L872.3 465.9 L875.1 464.8 L878.0 463.7 L880.9 462.5 L883.8 461.3 L886.7 460.0 L889.5 458.6 L892.4 457.3 L895.3 455.9 L898.1 454.4 L901.0 452.9 L903.9 451.4 L906.7 449.8 L909.6 448.2 L912.5 446.6 L915.3 444.9 L918.2 443.2 L921.1 441.5 L923.9 439.8 L926.8 438.0 L929.7 436.1 L932.5 434.3 L935.4 432.4 L938.3 430.5 L941.1 428.6 L944.0 426.7 L946.9 424.7 L949.7 422.7 L952.6 420.7 L955.5 418.6 L958.3 416.6 L961.2 414.5 L964.0 412.4 L966.9 410.3 L969.7 408.2 L972.6 406.0 L975.4 403.9 L978.2 401.7 L981.0 399.5 L983.8 397.3 L986.6 395.1 L989.4 392.9 L992.2 390.6 L994.9 388.4 L997.7 386.1 L1000.4 383.9 L1003.2 381.6 L1005.9 379.3 L1008.6 377.0 L1011.3 374.7 L1013.9 372.4 L1016.6 370.0 L1019.2 367.7 L1021.9 365.4 L1024.5 363.0 L1027.1 360.7 L1029.6 358.3 L1032.2 355.9 L1034.7 353.6 L1037.2 351.2 L1039.7 348.8 L1042.2 346.4"/>
<path d="M652.2 454.0 L657.2 456.6 L662.3 459.3 L667.4 461.9 L672.6 464.4 L677.7 467.0 L682.8 469.5 L688.0 472.0 L693.2 474.5 L698.4 476.9 L703.5 479.4 L708.7 481.8 L713.9 484.1 L719.0 486.4 L724.1 488.7 L729.3 491.0 L734.3 493.2 L739.4 495.3 L744.4 497.5 L749.4 499.5 L754.4 501.6 L759.3 503.5 L764.1 505.4 L768.9 507.3 L773.7 509.1 L778.3 510.8 L783.0 512.4 L787.5 514.0 L792.0 515.5 L796.4 516.9 L800.7 518.3 L805.0 519.5 L809.1 520.7 L813.2 521.8 L817.2 522.7 L821.1 523.6 L824.9 524.3 L828.7 525.0 L832.3 525.5 L835.9 526.0 L839.4 526.3 L842.8 526.5 L846.2 526.6 L849.4 526.6 L852.7 526.4 L855.8 526.2 L858.9 525.8 L862.0 525.4 L865.0 524.8 L867.9 524.1 L870.8 523.3 L873.7 522.4 L876.6 521.4 L879.4 520.3 L882.3 519.1 L885.1 517.8 L887.8 516.4 L890.6 515.0 L893.4 513.4 L896.2 511.8 L898.9 510.1 L901.7 508.4 L904.4 506.6 L907.2 504.7 L910.0 502.8 L912.7 500.8 L915.5 498.8 L918.3 496.7 L921.0 494.5 L923.8 492.3 L926.6 490.1 L929.4 487.9 L932.2 485.6 L935.0 483.2 L937.7 480.9 L940.5 478.5 L943.3 476.0 L946.1 473.6 L948.9 471.1 L951.7 468.6 L954.5 466.0 L957.3 463.5 L960.1 460.9 L962.8 458.3 L965.6 455.6 L968.4 453.0 L971.1 450.3 L973.9 447.7 L976.6 445.0 L979.3 442.3 L982.0 439.5 L984.7 436.8 L987.4 434.1 L990.1 431.3 L992.8 428.5 L995.4 425.8 L998.0 423.0 L1000.6 420.2 L1003.2 417.3 L1005.8 414.5 L1008.3 411.7 L1010.8 408.9 L1013.3 406.0 L1015.8 403.2 L1018.3 400.3 L1020.7 397.4 L1023.1 394.6 L1025.4 391.7 L1027.8 388.8 L1030.1 385.9 L1032.4 383.0 L1034.6 380.1 L1036.9 377.2 L1039.1 374.3 L1041.2 371.4 L1043.4 368.5 L1045.5 365.6 L1047.5 362.7"/>
</g>
<path d="M598.1 275.3 L596.8 275.9 L595.5 276.5 L594.2 277.2 L592.9 277.8 L591.7 278.5 L590.4 279.1 L589.1 279.8 L587.9 280.4 L586.6 281.0 L585.3 281.7 L584.1 282.3 L582.8 283.0 L581.6 283.6 L580.3 284.3 L579.1 284.9 L577.9 285.6 L576.6 286.3 L575.4 286.9 L574.2 287.6 L572.9 288.2 L571.7 288.9 L570.5 289.5 L569.3 290.2 L568.1 290.9 L566.9 291.5 L565.7 292.2 L564.5 292.9 L563.3 293.5 L562.1 294.2 L560.9 294.9 L559.8 295.5 L558.6 296.2 L557.4 296.9 L556.3 297.5 L555.1 298.2 L553.9 298.9 L552.8 299.5 L551.6 300.2 L550.5 300.9 L549.3 301.6 L548.2 302.2 L547.1 302.9 L546.0 303.6 L544.8 304.3 L543.7 304.9 L542.6 305.6 L541.5 306.3 L540.4 307.0 L539.3 307.6 L538.2 308.3 L537.1 309.0 L536.0 309.7 L535.0 310.4 L533.9 311.0 L532.8 311.7 L531.7 312.4 L530.7 313.1 L529.6 313.8 L528.6 314.4 L527.5 315.1 L526.5 315.8 L525.5 316.5 L524.4 317.2 L523.4 317.8 L522.4 318.5 L521.4 319.2 L520.4 319.9 L519.4 320.6 L518.4 321.2 L517.4 321.9 L516.4 322.6 L515.4 323.3 L514.4 324.0 L513.4 324.6 L512.5 325.3 L511.5 326.0 L510.5 326.7 L509.6 327.4 L508.6 328.0 L507.7 328.7 L506.8 329.4 L505.8 330.1 L504.9 330.8 L504.0 331.4 L503.1 332.1 L502.2 332.8 L501.3 333.5 L500.4 334.2 L499.5 334.8 L498.6 335.5 L497.7 336.2 L496.8 336.9 L495.9 337.5 L495.1 338.2 L494.2 338.9 L493.3 339.6 L492.5 340.2 L491.6 340.9 L490.8 341.6" fill="none" stroke="#ffb10d" stroke-width="1.389" stroke-dasharray="1.389 2.292"/>
<path d="M490.8 341.6 L489.7 342.5 L488.6 343.3 L487.5 344.2 L486.4 345.1 L485.4 346.0 L484.3 346.8 L483.3 347.7 L482.2 348.6 L481.2 349.4 L480.2 350.3 L479.2 351.2" fill="none" stroke="#ffb10d" stroke-width="1.389"/>
<path d="M608.4 275.4 L608.4 276.1 L608.3 276.8 L608.3 277.4 L608.2 278.1 L608.2 278.8 L608.1 279.5 L608.1 280.2 L608.1 280.9 L608.0 281.6 L608.0 282.2 L608.0 282.9 L608.0 283.6 L608.0 284.3 L608.0 285.0 L608.0 285.7 L608.0 286.3 L608.0 287.0 L608.0 287.7 L608.0 288.4 L608.0 289.1 L608.0 289.8 L608.1 290.5 L608.1 291.1 L608.1 291.8 L608.2 292.5 L608.2 293.2 L608.3 293.9 L608.3 294.6 L608.4 295.3 L608.4 295.9 L608.5 296.6 L608.5 297.3 L608.6 298.0 L608.7 298.7 L608.8 299.4 L608.8 300.1 L608.9 300.7 L609.0 301.4 L609.1 302.1 L609.2 302.8 L609.3 303.5 L609.4 304.2 L609.5 304.9 L609.6 305.5 L609.8 306.2 L609.9 306.9 L610.0 307.6 L610.1 308.3 L610.3 309.0 L610.4 309.7 L610.5 310.3 L610.7 311.0 L610.8 311.7 L611.0 312.4 L611.1 313.1 L611.3 313.8 L611.5 314.5 L611.6 315.2 L611.8 315.8 L612.0 316.5 L612.2 317.2 L612.3 317.9 L612.5 318.6 L612.7 319.3 L612.9 320.0 L613.1 320.6 L613.3 321.3 L613.5 322.0 L613.7 322.7 L614.0 323.4 L614.2 324.1 L614.4 324.8 L614.6 325.4 L614.9 326.1 L615.1 326.8 L615.3 327.5 L615.6 328.2 L615.8 328.9 L616.1 329.6 L616.3 330.2 L616.6 330.9 L616.8 331.6 L617.1 332.3 L617.4 333.0 L617.6 333.7 L617.9 334.4 L618.2 335.0 L618.5 335.7 L618.8 336.4 L619.1 337.1 L619.4 337.8 L619.7 338.5 L620.0 339.2 L620.3 339.9 L620.6 340.5 L620.9 341.2 L621.2 341.9 L621.5 342.6 L621.9 343.3" fill="none" stroke="#ffb10d" stroke-width="1.389" stroke-dasharray="1.389 2.292"/>
<path d="M621.9 343.3 L622.3 344.2 L622.8 345.2 L623.3 346.1 L623.7 347.1 L624.2 348.0 L624.7 349.0 L625.2 349.9 L625.7 350.9 L626.3 351.8 L626.8 352.8 L627.3 353.7" fill="none" stroke="#ffb10d" stroke-width="1.389"/>
<path d="M602.8 275.9 L601.7 277.0 L600.7 278.2 L599.7 279.4 L598.8 280.6 L597.8 281.7 L596.8 282.9 L595.9 284.1 L595.0 285.3 L594.1 286.4 L593.1 287.6 L592.2 288.8 L591.4 290.0 L590.5 291.2 L589.6 292.3 L588.8 293.5 L588.0 294.7 L587.1 295.9 L586.3 297.1 L585.5 298.2 L584.8 299.4 L584.0 300.6 L583.2 301.8 L582.5 303.0 L581.8 304.2 L581.0 305.3 L580.3 306.5 L579.6 307.7 L579.0 308.9 L578.3 310.1 L577.6 311.2 L577.0 312.4 L576.4 313.6 L575.7 314.8 L575.1 316.0 L574.6 317.2 L574.0 318.3 L573.4 319.5 L572.9 320.7 L572.3 321.9 L571.8 323.1 L571.3 324.3 L570.8 325.4 L570.3 326.6 L569.9 327.8 L569.4 329.0 L569.0 330.2 L568.5 331.4 L568.1 332.5 L567.7 333.7 L567.3 334.9 L566.9 336.1 L566.6 337.3 L566.2 338.4 L565.9 339.6 L565.6 340.8 L565.3 342.0 L565.0 343.2 L564.7 344.4 L564.4 345.5 L564.2 346.7 L563.9 347.9 L563.7 349.1 L563.5 350.3 L563.3 351.4 L563.1 352.6 L562.9 353.8 L562.7 355.0 L562.6 356.1 L562.5 357.3 L562.3 358.5 L562.2 359.7 L562.1 360.9 L562.1 362.0 L562.0 363.2 L561.9 364.4 L561.9 365.6 L561.9 366.7 L561.9 367.9 L561.9 369.1 L561.9 370.3 L561.9 371.4 L561.9 372.6 L562.0 373.8 L562.0 374.9 L562.1 376.1 L562.2 377.3 L562.3 378.5 L562.4 379.6 L562.6 380.8 L562.7 382.0 L562.9 383.1 L563.0 384.3 L563.2 385.5 L563.4 386.6 L563.6 387.8 L563.8 389.0 L564.1 390.1 L564.3 391.3 L564.6 392.4" fill="none" stroke="#ffb10d" stroke-width="1.389" stroke-dasharray="1.389 2.292"/>
<path d="M564.6 392.4 L565.5 396.3 L566.6 400.1 L567.8 403.8 L569.1 407.6 L570.5 411.4 L572.1 415.1 L573.8 418.9 L575.6 422.6 L577.5 426.3 L579.6 430.0 L581.7 433.7" fill="none" stroke="#ffb10d" stroke-width="1.389"/>
<path d="M601.5 275.4 L599.6 276.9 L597.8 278.5 L596.0 280.0 L594.2 281.6 L592.5 283.2 L590.7 284.7 L589.0 286.3 L587.3 287.9 L585.6 289.4 L584.0 291.0 L582.4 292.6 L580.8 294.1 L579.2 295.7 L577.6 297.3 L576.1 298.9 L574.6 300.4 L573.1 302.0 L571.6 303.6 L570.2 305.2 L568.7 306.7 L567.3 308.3 L566.0 309.9 L564.6 311.5 L563.3 313.1 L562.0 314.6 L560.7 316.2 L559.5 317.8 L558.2 319.4 L557.0 321.0 L555.8 322.5 L554.7 324.1 L553.6 325.7 L552.5 327.3 L551.4 328.9 L550.3 330.4 L549.3 332.0 L548.3 333.6 L547.3 335.2 L546.4 336.8 L545.4 338.3 L544.5 339.9 L543.7 341.5 L542.8 343.1 L542.0 344.6 L541.2 346.2 L540.4 347.8 L539.7 349.4 L538.9 350.9 L538.2 352.5 L537.6 354.1 L536.9 355.6 L536.3 357.2 L535.7 358.7 L535.1 360.3 L534.6 361.9 L534.0 363.4 L533.5 365.0 L533.1 366.5 L532.6 368.1 L532.2 369.6 L531.8 371.2 L531.4 372.7 L531.0 374.3 L530.7 375.8 L530.4 377.3 L530.1 378.9 L529.9 380.4 L529.6 381.9 L529.4 383.5 L529.2 385.0 L529.0 386.5 L528.9 388.0 L528.8 389.5 L528.7 391.0 L528.6 392.5 L528.5 394.0 L528.5 395.5 L528.5 397.0 L528.5 398.5 L528.5 400.0 L528.5 401.5 L528.6 403.0 L528.7 404.4 L528.8 405.9 L528.9 407.4 L529.0 408.8 L529.2 410.3 L529.3 411.7 L529.5 413.2 L529.7 414.6 L529.9 416.0 L530.2 417.5 L530.4 418.9 L530.7 420.3 L531.0 421.7 L531.2 423.1 L531.6 424.5 L531.9 425.9 L532.2 427.3" fill="none" stroke="#ffb10d" stroke-width="1.389" stroke-dasharray="1.389 2.292"/>
<path d="M532.2 427.3 L533.0 430.5 L533.9 433.7 L534.8 436.9 L535.7 440.0 L536.7 443.0 L537.7 446.0 L538.7 449.0 L539.7 451.8 L540.7 454.7 L541.6 457.4 L542.5 460.1" fill="none" stroke="#ffb10d" stroke-width="1.389"/>
<path d="M602.5 275.6 L600.4 277.7 L598.4 279.8 L596.3 281.8 L594.3 283.9 L592.4 286.0 L590.5 288.1 L588.6 290.2 L586.7 292.3 L584.9 294.4 L583.2 296.5 L581.4 298.6 L579.8 300.7 L578.1 302.8 L576.5 304.8 L575.0 306.9 L573.4 309.0 L572.0 311.1 L570.5 313.2 L569.1 315.3 L567.8 317.4 L566.5 319.5 L565.2 321.6 L564.0 323.7 L562.8 325.8 L561.7 327.9 L560.6 330.0 L559.5 332.1 L558.5 334.2 L557.5 336.3 L556.6 338.4 L555.7 340.5 L554.9 342.6 L554.1 344.7 L553.4 346.8 L552.7 348.9 L552.0 351.0 L551.4 353.1 L550.8 355.2 L550.3 357.3 L549.8 359.3 L549.3 361.4 L548.9 363.5 L548.6 365.6 L548.3 367.6 L548.0 369.7 L547.8 371.8 L547.6 373.9 L547.4 375.9 L547.3 378.0 L547.2 380.0 L547.2 382.1 L547.2 384.2 L547.3 386.2 L547.4 388.2 L547.5 390.3 L547.7 392.3 L547.9 394.4 L548.2 396.4 L548.5 398.4 L548.8 400.4 L549.2 402.4 L549.6 404.5 L550.0 406.5 L550.5 408.5 L551.0 410.5 L551.5 412.4 L552.1 414.4 L552.7 416.4 L553.4 418.4 L554.0 420.3 L554.7 422.3 L555.5 424.2 L556.2 426.2 L557.0 428.1 L557.8 430.0 L558.7 432.0 L559.6 433.9 L560.5 435.8 L561.4 437.7 L562.3 439.5 L563.3 441.4 L564.3 443.3 L565.3 445.1 L566.3 447.0 L567.3 448.8 L568.4 450.6 L569.4 452.4 L570.5 454.2 L571.6 456.0 L572.6 457.7 L573.7 459.5 L574.8 461.2 L575.9 463.0 L577.0 464.7 L578.1 466.3 L579.2 468.0 L580.3 469.7 L581.4 471.3 L582.5 472.9" fill="none" stroke="#ffb10d" stroke-width="1.389" stroke-dasharray="1.389 2.292"/>
<path d="M582.5 472.9 L583.5 474.5 L584.6 476.0 L585.6 477.5 L586.6 479.0 L587.5 480.5 L588.5 482.0 L589.4 483.4 L590.3 484.8 L591.1 486.2 L592.0 487.5 L592.7 488.9" fill="none" stroke="#ffb10d" stroke-width="1.389"/>
<path d="M603.3 275.6 L601.4 277.8 L599.5 280.1 L597.7 282.3 L595.9 284.6 L594.1 286.8 L592.4 289.1 L590.8 291.3 L589.2 293.6 L587.6 295.8 L586.1 298.1 L584.6 300.4 L583.2 302.6 L581.8 304.9 L580.5 307.1 L579.2 309.4 L577.9 311.6 L576.7 313.9 L575.6 316.2 L574.5 318.4 L573.5 320.7 L572.5 322.9 L571.5 325.2 L570.6 327.5 L569.7 329.7 L568.9 332.0 L568.2 334.2 L567.5 336.5 L566.8 338.7 L566.2 341.0 L565.6 343.3 L565.1 345.5 L564.7 347.8 L564.3 350.0 L563.9 352.3 L563.6 354.5 L563.3 356.8 L563.1 359.0 L562.9 361.3 L562.8 363.5 L562.7 365.8 L562.7 368.0 L562.7 370.3 L562.8 372.5 L562.9 374.7 L563.1 377.0 L563.3 379.2 L563.5 381.4 L563.8 383.7 L564.2 385.9 L564.6 388.1 L565.1 390.3 L565.5 392.6 L566.1 394.8 L566.7 397.0 L567.3 399.2 L568.0 401.4 L568.7 403.6 L569.5 405.8 L570.3 408.0 L571.1 410.2 L572.0 412.4 L572.9 414.6 L573.9 416.8 L574.9 419.0 L576.0 421.1 L577.1 423.3 L578.2 425.5 L579.4 427.6 L580.6 429.8 L581.8 432.0 L583.1 434.1 L584.4 436.2 L585.7 438.4 L587.1 440.5 L588.5 442.6 L590.0 444.7 L591.5 446.8 L593.0 448.9 L594.5 451.0 L596.1 453.1 L597.6 455.2 L599.3 457.2 L600.9 459.3 L602.5 461.3 L604.2 463.4 L605.9 465.4 L607.6 467.4 L609.4 469.4 L611.1 471.4 L612.8 473.4 L614.6 475.3 L616.4 477.3 L618.2 479.2 L620.0 481.2 L621.7 483.1 L623.5 485.0 L625.3 486.8 L627.1 488.7 L628.9 490.5" fill="none" stroke="#ffb10d" stroke-width="1.389" stroke-dasharray="1.389 2.292"/>
<path d="M628.9 490.5 L629.7 491.4 L630.5 492.2 L631.3 493.1 L632.1 493.9 L632.9 494.7 L633.7 495.5 L634.5 496.4 L635.3 497.2 L636.1 498.0 L636.9 498.8 L637.7 499.6" fill="none" stroke="#ffb10d" stroke-width="1.389"/>
<path d="M602.5 276.0 L599.8 278.3 L597.3 280.6 L594.8 283.0 L592.3 285.3 L589.9 287.7 L587.5 290.0 L585.2 292.4 L582.9 294.8 L580.7 297.1 L578.5 299.5 L576.4 301.8 L574.3 304.2 L572.3 306.6 L570.3 309.0 L568.4 311.3 L566.5 313.7 L564.7 316.1 L563.0 318.4 L561.3 320.8 L559.6 323.2 L558.1 325.6 L556.5 327.9 L555.1 330.3 L553.6 332.7 L552.3 335.0 L551.0 337.4 L549.7 339.8 L548.5 342.1 L547.4 344.5 L546.3 346.9 L545.3 349.2 L544.3 351.6 L543.4 353.9 L542.6 356.3 L541.8 358.6 L541.0 361.0 L540.3 363.3 L539.7 365.6 L539.1 368.0 L538.6 370.3 L538.1 372.6 L537.7 374.9 L537.3 377.3 L537.0 379.6 L536.8 381.9 L536.5 384.2 L536.4 386.5 L536.3 388.8 L536.2 391.0 L536.2 393.3 L536.3 395.6 L536.3 397.8 L536.5 400.1 L536.7 402.3 L536.9 404.6 L537.2 406.8 L537.5 409.0 L537.8 411.2 L538.2 413.4 L538.6 415.6 L539.1 417.7 L539.6 419.9 L540.2 422.1 L540.7 424.2 L541.3 426.3 L542.0 428.4 L542.6 430.5 L543.3 432.6 L544.0 434.7 L544.7 436.7 L545.5 438.8 L546.3 440.8 L547.1 442.8 L547.9 444.8 L548.7 446.7 L549.5 448.7 L550.3 450.6 L551.1 452.5 L552.0 454.4 L552.8 456.2 L553.6 458.0 L554.4 459.8 L555.2 461.6 L556.0 463.4 L556.8 465.1 L557.5 466.8 L558.2 468.5 L558.9 470.1 L559.5 471.7 L560.1 473.3 L560.7 474.8 L561.2 476.3 L561.7 477.8 L562.1 479.2 L562.4 480.6 L562.7 481.9 L562.9 483.2 L563.0 484.5 L563.0 485.7" fill="none" stroke="#ffb10d" stroke-width="1.389" stroke-dasharray="1.389 2.292"/>
<path d="M563.0 485.7 L563.0 486.5 L563.0 487.2 L562.8 487.9 L562.7 488.6 L562.5 489.3 L562.3 490.0 L562.0 490.6 L561.7 491.2 L561.3 491.8 L560.9 492.4 L560.4 492.9" fill="none" stroke="#ffb10d" stroke-width="1.389"/>
<path d="M598.6 229.5 L595.2 232.2 L591.9 234.8 L588.7 237.4 L585.5 240.0 L582.3 242.7 L579.3 245.3 L576.3 247.9 L573.3 250.6 L570.4 253.2 L567.6 255.8 L564.9 258.5 L562.2 261.1 L559.6 263.8 L557.0 266.4 L554.5 269.1 L552.1 271.8 L549.8 274.4 L547.5 277.1 L545.3 279.7 L543.2 282.4 L541.1 285.0 L539.1 287.7 L537.2 290.4 L535.4 293.0 L533.6 295.7 L532.0 298.4 L530.3 301.0 L528.8 303.7 L527.4 306.4 L526.0 309.0 L524.7 311.7 L523.4 314.4 L522.3 317.1 L521.2 319.7 L520.2 322.4 L519.3 325.1 L518.5 327.7 L517.7 330.4 L517.0 333.1 L516.4 335.7 L515.9 338.4 L515.4 341.1 L515.1 343.7 L514.8 346.4 L514.6 349.1 L514.5 351.7 L514.4 354.4 L514.4 357.1 L514.5 359.7 L514.7 362.4 L515.0 365.0 L515.3 367.7 L515.7 370.4 L516.2 373.0 L516.8 375.7 L517.4 378.3 L518.2 381.0 L519.0 383.6 L519.8 386.3 L520.8 388.9 L521.8 391.5 L522.9 394.2 L524.1 396.8 L525.3 399.4 L526.6 402.1 L528.0 404.7 L529.5 407.3 L531.0 409.9 L532.6 412.6 L534.3 415.2 L536.0 417.8 L537.8 420.4 L539.7 423.0 L541.6 425.6 L543.6 428.2 L545.6 430.7 L547.8 433.3 L549.9 435.9 L552.2 438.5 L554.5 441.0 L556.8 443.6 L559.2 446.1 L561.7 448.7 L564.2 451.2 L566.7 453.7 L569.3 456.2 L572.0 458.7 L574.7 461.2 L577.4 463.7 L580.2 466.2 L583.0 468.7 L585.9 471.1 L588.7 473.6 L591.7 476.0 L594.6 478.4 L597.6 480.8 L600.6 483.2 L603.6 485.6 L606.6 487.9" fill="none" stroke="#e61cff" stroke-width="1.389" stroke-dasharray="1.389 2.292"/>
<path d="M606.6 487.9 L608.7 489.5 L610.7 491.1 L612.8 492.7 L614.9 494.3 L616.9 495.8 L619.0 497.4 L621.1 498.9 L623.1 500.4 L625.2 501.9 L627.2 503.4 L629.3 504.9" fill="none" stroke="#e61cff" stroke-width="1.389"/>
<path d="M740.2 246.9 L736.8 250.3 L733.5 253.8 L730.2 257.2 L727.0 260.7 L723.8 264.2 L720.7 267.6 L717.7 271.1 L714.7 274.6 L711.8 278.1 L708.9 281.6 L706.2 285.1 L703.5 288.6 L700.8 292.1 L698.2 295.6 L695.7 299.1 L693.3 302.7 L691.0 306.2 L688.7 309.7 L686.5 313.2 L684.4 316.7 L682.3 320.3 L680.3 323.8 L678.5 327.3 L676.6 330.8 L674.9 334.4 L673.3 337.9 L671.7 341.4 L670.2 344.9 L668.8 348.4 L667.5 351.9 L666.2 355.5 L665.1 359.0 L664.0 362.5 L663.0 365.9 L662.1 369.4 L661.3 372.9 L660.5 376.4 L659.8 379.9 L659.3 383.3 L658.7 386.8 L658.3 390.2 L658.0 393.6 L657.7 397.1 L657.5 400.5 L657.4 403.9 L657.3 407.2 L657.3 410.6 L657.4 414.0 L657.6 417.3 L657.8 420.6 L658.1 424.0 L658.4 427.2 L658.8 430.5 L659.3 433.8 L659.8 437.0 L660.3 440.2 L660.9 443.4 L661.6 446.5 L662.3 449.6 L663.0 452.7 L663.8 455.8 L664.5 458.8 L665.3 461.8 L666.1 464.8 L667.0 467.7 L667.8 470.5 L668.6 473.4 L669.4 476.1 L670.2 478.9 L670.9 481.5 L671.6 484.1 L672.3 486.7 L672.9 489.1 L673.4 491.5 L673.8 493.9 L674.2 496.1 L674.4 498.3 L674.5 500.3 L674.5 502.3 L674.3 504.2 L673.9 505.9 L673.3 507.6 L672.6 509.1 L671.6 510.6 L670.4 511.9 L668.9 513.0 L667.1 514.0 L665.1 514.9 L662.7 515.7 L660.0 516.2 L657.0 516.7 L653.6 517.0 L649.8 517.1 L645.7 517.1 L641.2 516.9 L636.4 516.6 L631.2 516.1 L625.5 515.5 L619.6 514.7" fill="none" stroke="#a4ff27" stroke-width="1.389" stroke-dasharray="1.389 2.292"/>
<path d="M619.6 514.7 L619.0 514.6 L618.5 514.5 L618.0 514.5 L617.5 514.4 L617.0 514.3 L616.4 514.2 L615.9 514.2 L615.4 514.1 L614.8 514.0 L614.3 513.9 L613.8 513.8" fill="none" stroke="#a4ff27" stroke-width="1.389"/>
<path d="M750.9 253.2 L749.2 256.8 L747.6 260.4 L746.0 264.0 L744.5 267.6 L743.1 271.2 L741.7 274.8 L740.4 278.3 L739.1 281.9 L737.9 285.5 L736.8 289.1 L735.7 292.7 L734.6 296.3 L733.7 299.9 L732.8 303.5 L732.0 307.1 L731.2 310.7 L730.5 314.3 L729.8 317.9 L729.2 321.5 L728.7 325.1 L728.3 328.7 L727.9 332.3 L727.6 335.9 L727.3 339.5 L727.1 343.1 L727.0 346.7 L726.9 350.3 L726.9 353.9 L727.0 357.5 L727.1 361.1 L727.3 364.7 L727.6 368.3 L727.9 371.9 L728.3 375.5 L728.8 379.1 L729.3 382.7 L729.9 386.3 L730.5 389.9 L731.3 393.5 L732.0 397.1 L732.9 400.7 L733.8 404.3 L734.7 407.9 L735.8 411.5 L736.8 415.0 L738.0 418.6 L739.2 422.2 L740.4 425.8 L741.8 429.4 L743.2 433.0 L744.6 436.5 L746.1 440.1 L747.6 443.7 L749.2 447.3 L750.9 450.8 L752.6 454.4 L754.4 458.0 L756.2 461.5 L758.1 465.1 L760.0 468.6 L762.0 472.2 L764.0 475.7 L766.0 479.3 L768.1 482.8 L770.3 486.4 L772.5 489.9 L774.7 493.4 L777.0 496.9 L779.3 500.4 L781.7 503.9 L784.0 507.4 L786.5 510.9 L788.9 514.4 L791.4 517.8 L793.9 521.3 L796.4 524.7 L798.9 528.1 L801.5 531.6 L804.0 534.9 L806.6 538.3 L809.2 541.6 L811.7 544.9 L814.3 548.2 L816.8 551.4 L819.3 554.6 L821.7 557.7 L824.0 560.8 L826.3 563.8 L828.5 566.7 L830.5 569.4 L832.3 572.1 L833.9 574.6 L835.1 576.9 L836.0 579.0 L836.3 580.8 L836.0 582.3 L835.0 583.4 L833.1 584.2 L830.2 584.5" fill="none" stroke="#a4ff27" stroke-width="1.389" stroke-dasharray="1.389 2.292"/>
<path d="M830.2 584.5 L828.9 584.5 L827.4 584.4 L825.8 584.3 L824.1 584.1 L822.2 583.9 L820.2 583.6 L818.1 583.3 L815.8 582.9 L813.3 582.5 L810.8 582.0 L808.1 581.5" fill="none" stroke="#a4ff27" stroke-width="1.389"/>
<path d="M768.9 285.2 L766.8 285.7 L764.7 286.1 L762.7 286.6 L760.6 287.0 L758.5 287.5 L756.4 287.9 L754.3 288.4 L752.2 288.9 L750.1 289.4 L748.0 289.8 L746.0 290.3 L743.9 290.8 L741.8 291.3 L739.7 291.8 L737.6 292.3 L735.5 292.8 L733.5 293.3 L731.4 293.8 L729.3 294.3 L727.2 294.8 L725.1 295.3 L723.1 295.9 L721.0 296.4 L718.9 296.9 L716.8 297.4 L714.8 298.0 L712.7 298.5 L710.6 299.0 L708.5 299.6 L706.5 300.1 L704.4 300.6 L702.3 301.2 L700.3 301.7 L698.2 302.3 L696.2 302.8 L694.1 303.4 L692.0 303.9 L690.0 304.5 L687.9 305.1 L685.9 305.6 L683.8 306.2 L681.8 306.8 L679.7 307.3 L677.7 307.9 L675.6 308.5 L673.6 309.0 L671.6 309.6 L669.5 310.2 L667.5 310.7 L665.5 311.3 L663.4 311.9 L661.4 312.5 L659.4 313.0 L657.3 313.6 L655.3 314.2 L653.3 314.8 L651.3 315.4 L649.3 315.9 L647.3 316.5 L645.3 317.1 L643.2 317.7 L641.2 318.3 L639.2 318.8 L637.2 319.4 L635.2 320.0 L633.2 320.6 L631.3 321.2 L629.3 321.8 L627.3 322.3 L625.3 322.9 L623.3 323.5 L621.3 324.1 L619.4 324.7 L617.4 325.3 L615.4 325.8 L613.5 326.4 L611.5 327.0 L609.5 327.6 L607.6 328.1 L605.6 328.7 L603.7 329.3 L601.7 329.9 L599.8 330.4 L597.8 331.0 L595.9 331.6 L593.9 332.2 L592.0 332.7 L590.1 333.3 L588.1 333.9 L586.2 334.4 L584.3 335.0 L582.3 335.5 L580.4 336.1 L578.5 336.7 L576.6 337.2 L574.7 337.8 L572.8 338.3 L570.9 338.9 L569.0 339.4" fill="none" stroke="#ff1c00" stroke-width="1.389" stroke-dasharray="1.389 2.292"/>
<path d="M569.0 339.4 L566.8 340.0 L564.6 340.7 L562.4 341.3 L560.2 341.9 L558.0 342.5 L555.8 343.1 L553.7 343.7 L551.5 344.4 L549.3 345.0 L547.1 345.6 L545.0 346.1" fill="none" stroke="#ff1c00" stroke-width="1.389"/>
<path d="M762.6 292.2 L760.7 292.5 L758.7 292.9 L756.8 293.3 L754.8 293.7 L752.9 294.1 L750.9 294.5 L749.0 294.9 L747.1 295.3 L745.1 295.7 L743.2 296.2 L741.2 296.6 L739.3 297.0 L737.3 297.4 L735.4 297.8 L733.5 298.3 L731.5 298.7 L729.6 299.1 L727.6 299.5 L725.7 300.0 L723.8 300.4 L721.8 300.9 L719.9 301.3 L717.9 301.7 L716.0 302.2 L714.1 302.6 L712.1 303.1 L710.2 303.5 L708.3 304.0 L706.3 304.4 L704.4 304.9 L702.5 305.3 L700.6 305.8 L698.6 306.2 L696.7 306.7 L694.8 307.2 L692.9 307.6 L690.9 308.1 L689.0 308.6 L687.1 309.0 L685.2 309.5 L683.3 310.0 L681.4 310.4 L679.4 310.9 L677.5 311.4 L675.6 311.9 L673.7 312.3 L671.8 312.8 L669.9 313.3 L668.0 313.8 L666.1 314.2 L664.2 314.7 L662.3 315.2 L660.4 315.7 L658.5 316.1 L656.6 316.6 L654.7 317.1 L652.8 317.6 L650.9 318.1 L649.0 318.5 L647.1 319.0 L645.2 319.5 L643.4 320.0 L641.5 320.5 L639.6 320.9 L637.7 321.4 L635.8 321.9 L634.0 322.4 L632.1 322.9 L630.2 323.3 L628.3 323.8 L626.5 324.3 L624.6 324.8 L622.7 325.3 L620.9 325.7 L619.0 326.2 L617.2 326.7 L615.3 327.2 L613.4 327.6 L611.6 328.1 L609.7 328.6 L607.9 329.1 L606.0 329.5 L604.2 330.0 L602.3 330.5 L600.5 331.0 L598.7 331.4 L596.8 331.9 L595.0 332.4 L593.1 332.8 L591.3 333.3 L589.5 333.7 L587.6 334.2 L585.8 334.7 L584.0 335.1 L582.2 335.6 L580.3 336.0 L578.5 336.5 L576.7 336.9 L574.9 337.4" fill="none" stroke="#ff1c00" stroke-width="1.389" stroke-dasharray="1.389 2.292"/>
<path d="M574.9 337.4 L574.6 337.5 L574.3 337.5 L574.1 337.6 L573.8 337.7 L573.5 337.7 L573.2 337.8 L573.0 337.9 L572.7 337.9 L572.4 338.0 L572.1 338.1 L571.9 338.1" fill="none" stroke="#ff1c00" stroke-width="1.389"/>
<path d="M762.7 295.6 L760.9 295.9 L759.1 296.3 L757.4 296.6 L755.6 296.9 L753.8 297.3 L752.0 297.6 L750.2 298.0 L748.5 298.3 L746.7 298.7 L744.9 299.0 L743.1 299.4 L741.3 299.7 L739.6 300.1 L737.8 300.4 L736.0 300.8 L734.2 301.1 L732.5 301.5 L730.7 301.9 L728.9 302.2 L727.1 302.6 L725.4 303.0 L723.6 303.4 L721.8 303.7 L720.0 304.1 L718.3 304.5 L716.5 304.8 L714.7 305.2 L713.0 305.6 L711.2 306.0 L709.4 306.4 L707.6 306.8 L705.9 307.1 L704.1 307.5 L702.3 307.9 L700.6 308.3 L698.8 308.7 L697.1 309.1 L695.3 309.5 L693.5 309.9 L691.8 310.2 L690.0 310.6 L688.3 311.0 L686.5 311.4 L684.7 311.8 L683.0 312.2 L681.2 312.6 L679.5 313.0 L677.7 313.4 L676.0 313.8 L674.2 314.2 L672.5 314.6 L670.7 315.0 L669.0 315.4 L667.2 315.8 L665.5 316.2 L663.7 316.6 L662.0 317.0 L660.3 317.4 L658.5 317.8 L656.8 318.2 L655.0 318.6 L653.3 319.0 L651.6 319.4 L649.8 319.9 L648.1 320.3 L646.4 320.7 L644.6 321.1 L642.9 321.5 L641.2 321.9 L639.4 322.3 L637.7 322.7 L636.0 323.1 L634.3 323.5 L632.5 323.9 L630.8 324.3 L629.1 324.7 L627.4 325.1 L625.7 325.5 L623.9 325.9 L622.2 326.3 L620.5 326.7 L618.8 327.1 L617.1 327.5 L615.4 327.9 L613.7 328.3 L612.0 328.7 L610.2 329.1 L608.5 329.5 L606.8 329.9 L605.1 330.3 L603.4 330.7 L601.7 331.1 L600.0 331.4 L598.3 331.8 L596.6 332.2 L594.9 332.6 L593.2 333.0 L591.5 333.4 L589.9 333.8" fill="none" stroke="#ff1c00" stroke-width="1.389" stroke-dasharray="1.389 2.292"/>
<path d="M589.9 333.8 L588.7 334.0 L587.5 334.3 L586.4 334.6 L585.2 334.8 L584.1 335.1 L582.9 335.3 L581.7 335.6 L580.6 335.9 L579.4 336.1 L578.3 336.4 L577.1 336.6" fill="none" stroke="#ff1c00" stroke-width="1.389"/>
<path d="M767.2 293.4 L766.3 294.8 L765.4 296.2 L764.5 297.6 L763.6 298.9 L762.7 300.3 L761.8 301.7 L760.9 303.1 L760.0 304.5 L759.2 305.9 L758.3 307.2 L757.4 308.6 L756.6 310.0 L755.8 311.4 L754.9 312.8 L754.1 314.2 L753.3 315.5 L752.5 316.9 L751.7 318.3 L750.9 319.7 L750.2 321.1 L749.4 322.5 L748.6 323.8 L747.9 325.2 L747.1 326.6 L746.4 328.0 L745.7 329.4 L745.0 330.8 L744.3 332.1 L743.6 333.5 L742.9 334.9 L742.2 336.3 L741.5 337.7 L740.8 339.1 L740.2 340.4 L739.5 341.8 L738.9 343.2 L738.3 344.6 L737.6 346.0 L737.0 347.3 L736.4 348.7 L735.8 350.1 L735.3 351.5 L734.7 352.9 L734.1 354.2 L733.6 355.6 L733.0 357.0 L732.5 358.4 L731.9 359.7 L731.4 361.1 L730.9 362.5 L730.4 363.9 L729.9 365.2 L729.4 366.6 L728.9 368.0 L728.5 369.3 L728.0 370.7 L727.6 372.1 L727.1 373.4 L726.7 374.8 L726.3 376.2 L725.9 377.5 L725.5 378.9 L725.1 380.2 L724.7 381.6 L724.3 383.0 L723.9 384.3 L723.6 385.7 L723.2 387.0 L722.9 388.4 L722.6 389.7 L722.2 391.1 L721.9 392.4 L721.6 393.8 L721.3 395.1 L721.0 396.5 L720.8 397.8 L720.5 399.1 L720.2 400.5 L720.0 401.8 L719.7 403.2 L719.5 404.5 L719.3 405.8 L719.0 407.2 L718.8 408.5 L718.6 409.8 L718.4 411.1 L718.2 412.4 L718.1 413.8 L717.9 415.1 L717.7 416.4 L717.6 417.7 L717.4 419.0 L717.3 420.3 L717.2 421.6 L717.0 422.9 L716.9 424.2 L716.8 425.5 L716.7 426.8 L716.6 428.1" fill="none" stroke="#ff1c00" stroke-width="1.389" stroke-dasharray="1.389 2.292"/>
<path d="M716.6 428.1 L716.5 429.5 L716.4 430.8 L716.3 432.2 L716.3 433.5 L716.2 434.8 L716.1 436.2 L716.1 437.5 L716.1 438.8 L716.0 440.2 L716.0 441.5 L716.0 442.8" fill="none" stroke="#ff1c00" stroke-width="1.389"/>
<path d="M772.6 296.2 L770.9 298.5 L769.3 300.7 L767.7 303.0 L766.1 305.2 L764.6 307.5 L763.0 309.7 L761.5 312.0 L760.0 314.2 L758.5 316.5 L757.1 318.7 L755.6 321.0 L754.2 323.2 L752.8 325.5 L751.5 327.7 L750.1 330.0 L748.8 332.2 L747.5 334.5 L746.2 336.7 L744.9 339.0 L743.7 341.2 L742.5 343.5 L741.3 345.7 L740.1 347.9 L739.0 350.2 L737.8 352.4 L736.7 354.7 L735.7 356.9 L734.6 359.1 L733.6 361.3 L732.6 363.6 L731.6 365.8 L730.6 368.0 L729.7 370.2 L728.8 372.5 L727.9 374.7 L727.0 376.9 L726.2 379.1 L725.4 381.3 L724.6 383.5 L723.8 385.7 L723.1 387.9 L722.3 390.0 L721.6 392.2 L721.0 394.4 L720.3 396.5 L719.7 398.7 L719.1 400.9 L718.5 403.0 L717.9 405.2 L717.3 407.3 L716.8 409.4 L716.3 411.5 L715.8 413.7 L715.3 415.8 L714.9 417.9 L714.5 420.0 L714.0 422.0 L713.7 424.1 L713.3 426.2 L712.9 428.2 L712.6 430.3 L712.2 432.3 L711.9 434.3 L711.6 436.3 L711.3 438.3 L711.1 440.3 L710.8 442.3 L710.5 444.3 L710.3 446.2 L710.1 448.1 L709.8 450.0 L709.6 451.9 L709.4 453.8 L709.2 455.7 L709.0 457.6 L708.8 459.4 L708.6 461.2 L708.4 463.0 L708.2 464.8 L707.9 466.5 L707.7 468.3 L707.5 470.0 L707.3 471.7 L707.0 473.3 L706.8 475.0 L706.5 476.6 L706.2 478.2 L705.9 479.7 L705.6 481.2 L705.2 482.7 L704.8 484.2 L704.4 485.6 L704.0 487.0 L703.5 488.4 L703.0 489.7 L702.5 491.0 L701.9 492.3 L701.2 493.5 L700.5 494.7" fill="none" stroke="#ff1c00" stroke-width="1.389" stroke-dasharray="1.389 2.292"/>
<path d="M700.5 494.7 L700.1 495.4 L699.6 496.0 L699.1 496.7 L698.6 497.4 L698.1 498.0 L697.5 498.6 L696.9 499.2 L696.3 499.8 L695.7 500.3 L695.0 500.9 L694.3 501.4" fill="none" stroke="#ff1c00" stroke-width="1.389"/>
<path d="M766.8 293.9 L765.6 297.4 L764.5 300.9 L763.4 304.4 L762.3 307.9 L761.3 311.4 L760.3 314.9 L759.4 318.3 L758.6 321.8 L757.7 325.3 L757.0 328.8 L756.3 332.3 L755.6 335.8 L755.0 339.3 L754.4 342.8 L753.9 346.3 L753.5 349.7 L753.1 353.2 L752.7 356.7 L752.4 360.2 L752.2 363.7 L752.0 367.2 L751.8 370.6 L751.7 374.1 L751.7 377.6 L751.7 381.1 L751.8 384.6 L751.9 388.0 L752.0 391.5 L752.3 395.0 L752.5 398.4 L752.8 401.9 L753.2 405.4 L753.6 408.8 L754.1 412.3 L754.6 415.8 L755.2 419.2 L755.8 422.7 L756.5 426.1 L757.2 429.6 L758.0 433.0 L758.8 436.4 L759.6 439.9 L760.5 443.3 L761.5 446.7 L762.5 450.1 L763.5 453.5 L764.6 456.9 L765.7 460.3 L766.8 463.7 L768.0 467.1 L769.3 470.5 L770.5 473.9 L771.9 477.2 L773.2 480.6 L774.6 483.9 L776.0 487.2 L777.4 490.6 L778.9 493.9 L780.4 497.1 L781.9 500.4 L783.4 503.7 L785.0 506.9 L786.5 510.1 L788.1 513.3 L789.7 516.5 L791.3 519.6 L792.8 522.7 L794.4 525.8 L796.0 528.8 L797.5 531.8 L799.0 534.7 L800.5 537.6 L801.9 540.5 L803.3 543.2 L804.5 545.9 L805.7 548.5 L806.8 551.0 L807.7 553.5 L808.5 555.8 L809.1 557.9 L809.4 559.9 L809.5 561.8 L809.3 563.4 L808.7 564.9 L807.6 566.1 L806.2 567.1 L804.2 567.9 L801.6 568.4 L798.5 568.6 L794.7 568.5 L790.3 568.1 L785.2 567.5 L779.5 566.6 L773.1 565.5 L766.2 564.1 L758.7 562.5 L750.7 560.7 L742.2 558.8 L733.3 556.7" fill="none" stroke="#ff1c00" stroke-width="1.389" stroke-dasharray="1.389 2.292"/>
<path d="M733.3 556.7 L732.3 556.5 L731.2 556.2 L730.2 556.0 L729.2 555.7 L728.1 555.5 L727.0 555.2 L726.0 554.9 L724.9 554.7 L723.8 554.4 L722.8 554.2 L721.7 553.9" fill="none" stroke="#ff1c00" stroke-width="1.389"/>
<path d="M767.6 294.7 L767.2 297.4 L766.7 300.2 L766.3 303.0 L766.0 305.7 L765.6 308.5 L765.3 311.3 L765.0 314.0 L764.8 316.8 L764.5 319.6 L764.3 322.3 L764.2 325.1 L764.0 327.8 L763.9 330.6 L763.9 333.4 L763.8 336.1 L763.8 338.9 L763.8 341.7 L763.9 344.4 L764.0 347.2 L764.1 350.0 L764.2 352.7 L764.4 355.5 L764.6 358.3 L764.8 361.0 L765.1 363.8 L765.4 366.5 L765.7 369.3 L766.0 372.1 L766.4 374.8 L766.8 377.6 L767.3 380.4 L767.7 383.1 L768.2 385.9 L768.8 388.7 L769.3 391.4 L769.9 394.2 L770.5 396.9 L771.2 399.7 L771.8 402.5 L772.5 405.2 L773.3 408.0 L774.0 410.8 L774.8 413.5 L775.6 416.3 L776.5 419.0 L777.3 421.8 L778.2 424.6 L779.1 427.3 L780.1 430.1 L781.1 432.9 L782.1 435.6 L783.1 438.4 L784.2 441.1 L785.2 443.9 L786.3 446.7 L787.5 449.4 L788.6 452.2 L789.8 454.9 L791.0 457.7 L792.2 460.5 L793.5 463.2 L794.8 466.0 L796.1 468.7 L797.4 471.5 L798.7 474.2 L800.1 477.0 L801.5 479.8 L802.9 482.5 L804.4 485.3 L805.8 488.0 L807.3 490.8 L808.8 493.5 L810.3 496.3 L811.8 499.0 L813.4 501.8 L814.9 504.5 L816.5 507.3 L818.1 510.0 L819.8 512.8 L821.4 515.5 L823.1 518.2 L824.7 521.0 L826.4 523.7 L828.1 526.5 L829.8 529.2 L831.6 531.9 L833.3 534.7 L835.1 537.4 L836.8 540.1 L838.6 542.8 L840.4 545.5 L842.2 548.3 L844.0 551.0 L845.8 553.7 L847.7 556.4 L849.5 559.0 L851.3 561.7 L853.1 564.4 L855.0 567.1" fill="none" stroke="#ff1c00" stroke-width="1.389" stroke-dasharray="1.389 2.292"/>
<path d="M855.0 567.1 L856.7 569.5 L858.3 571.9 L860.0 574.4 L861.7 576.8 L863.3 579.1 L864.9 581.5 L866.5 583.8 L868.0 586.0 L869.5 588.3 L870.9 590.4 L872.1 592.4" fill="none" stroke="#ff1c00" stroke-width="1.389"/>
<g stroke="#ff6347" stroke-width="1" fill="none">
<path d="M477.6 351.2h3.2M479.2 349.6v3.2"/>
<path d="M625.7 353.7h3.2M627.3 352.1v3.2"/>
<path d="M580.1 433.7h3.2M581.7 432.1v3.2"/>
<path d="M540.9 460.1h3.2M542.5 458.5v3.2"/>
<path d="M591.1 488.9h3.2M592.7 487.3v3.2"/>
<path d="M636.1 499.6h3.2M637.7 498.0v3.2"/>
<path d="M558.8 492.9h3.2M560.4 491.3v3.2"/>
<path d="M627.7 504.9h3.2M629.3 503.3v3.2"/>
<path d="M612.2 513.8h3.2M613.8 512.2v3.2"/>
<path d="M806.5 581.5h3.2M808.1 579.9v3.2"/>
<path d="M543.4 346.1h3.2M545.0 344.5v3.2"/>
<path d="M570.3 338.1h3.2M571.9 336.5v3.2"/>
<path d="M575.5 336.6h3.2M577.1 335.0v3.2"/>
<path d="M714.4 442.8h3.2M716.0 441.2v3.2"/>
<path d="M692.7 501.4h3.2M694.3 499.8v3.2"/>
<path d="M720.1 553.9h3.2M721.7 552.3v3.2"/>
<path d="M870.5 592.4h3.2M872.1 590.8v3.2"/>
</g>
<path d="M624.9 232.4 L623.1 234.5 L621.2 236.5 L619.2 238.6 L617.1 240.5 L614.9 242.4 L612.6 244.2 L610.2 245.9 L607.8 247.5 L605.4 249.0 L602.9 250.4 L600.4 251.6 L598.0 252.7 L595.5 253.6 L593.1 254.4 L590.7 254.9 L588.4 255.4 L586.2 255.6 L584.0 255.7 L582.0 255.6 L580.1 255.4 L578.3 254.9 L576.6 254.4 L575.2 253.6 L573.9 252.7 L572.8 251.6 L571.9 250.4 L571.3 249.0 L570.9 247.5 L570.7 245.9 L570.8 244.2 L571.1 242.4 L571.7 240.5 L572.6 238.6 L573.7 236.5 L575.0 234.5 L576.6 232.4 L578.5 230.3 L580.5 228.2 L582.8 226.1 L585.2 224.1 L587.8 222.1 L590.6 220.2 L593.4 218.3 L596.4 216.6 L599.3 215.0 L602.4 213.5 L605.4 212.1 L608.3 210.9 L611.3 209.9 L614.1 209.0 L616.8 208.4 L619.3 207.9 L621.7 207.6 L623.9 207.5 L625.9 207.6 L627.7 207.9 L629.2 208.4 L630.5 209.0 L631.6 209.9 L632.4 210.9 L633.0 212.1 L633.3 213.5 L633.4 215.0 L633.3 216.6 L632.9 218.3 L632.4 220.2 L631.6 222.1 L630.6 224.1 L629.4 226.1 L628.1 228.2 L626.6 230.3 L624.9 232.4 Z" fill="none" stroke="#e61cff" stroke-width="2.083"/>
<path d="M627.8 271.9 L626.8 274.0 L625.7 276.1 L624.5 278.1 L623.1 280.1 L621.6 282.0 L620.1 283.8 L618.4 285.6 L616.6 287.2 L614.7 288.7 L612.8 290.1 L610.8 291.4 L608.8 292.5 L606.7 293.4 L604.5 294.2 L602.4 294.8 L600.2 295.3 L598.1 295.5 L596.0 295.6 L593.9 295.5 L591.9 295.3 L589.9 294.8 L588.1 294.2 L586.3 293.4 L584.7 292.5 L583.2 291.4 L581.8 290.1 L580.7 288.7 L579.7 287.2 L578.9 285.6 L578.3 283.8 L577.9 282.0 L577.8 280.1 L577.9 278.1 L578.2 276.1 L578.7 274.0 L579.5 271.9 L580.5 269.8 L581.7 267.7 L583.1 265.7 L584.8 263.6 L586.6 261.7 L588.5 259.8 L590.6 258.0 L592.8 256.3 L595.2 254.7 L597.6 253.2 L600.0 251.9 L602.5 250.7 L605.0 249.7 L607.4 248.9 L609.8 248.2 L612.2 247.8 L614.4 247.5 L616.6 247.4 L618.6 247.5 L620.5 247.8 L622.3 248.2 L623.9 248.9 L625.3 249.7 L626.6 250.7 L627.6 251.9 L628.5 253.2 L629.2 254.7 L629.8 256.3 L630.1 258.0 L630.3 259.8 L630.3 261.7 L630.1 263.6 L629.7 265.7 L629.2 267.7 L628.6 269.8 L627.8 271.9 Z" fill="none" stroke="#ffb10d" stroke-width="2.083"/>
<path d="M769.1 252.6 L768.4 254.7 L767.5 256.8 L766.4 258.8 L765.2 260.7 L763.9 262.7 L762.4 264.5 L760.8 266.2 L759.1 267.8 L757.3 269.3 L755.4 270.7 L753.5 271.9 L751.5 273.0 L749.4 274.0 L747.3 274.7 L745.1 275.3 L743.0 275.8 L740.9 276.0 L738.8 276.1 L736.7 276.0 L734.6 275.8 L732.7 275.3 L730.8 274.7 L729.0 274.0 L727.4 273.0 L725.9 271.9 L724.5 270.7 L723.3 269.3 L722.2 267.8 L721.3 266.2 L720.6 264.5 L720.2 262.7 L719.9 260.7 L719.8 258.8 L720.0 256.8 L720.3 254.7 L720.9 252.6 L721.6 250.5 L722.6 248.4 L723.8 246.3 L725.1 244.3 L726.7 242.3 L728.3 240.4 L730.2 238.6 L732.1 236.9 L734.2 235.3 L736.3 233.8 L738.5 232.5 L740.8 231.3 L743.1 230.3 L745.4 229.4 L747.7 228.7 L749.9 228.3 L752.1 228.0 L754.3 227.9 L756.3 228.0 L758.3 228.3 L760.1 228.7 L761.8 229.4 L763.4 230.3 L764.9 231.3 L766.2 232.5 L767.3 233.8 L768.3 235.3 L769.1 236.9 L769.7 238.6 L770.1 240.4 L770.4 242.3 L770.5 244.3 L770.4 246.3 L770.2 248.4 L769.7 250.5 L769.1 252.6 Z" fill="none" stroke="#a4ff27" stroke-width="2.083"/>
<path d="M796.1 293.1 L795.8 295.2 L795.3 297.3 L794.7 299.3 L793.9 301.3 L793.0 303.3 L791.9 305.1 L790.7 306.9 L789.3 308.5 L787.8 310.0 L786.2 311.5 L784.5 312.7 L782.7 313.8 L780.8 314.8 L778.9 315.6 L776.8 316.2 L774.8 316.7 L772.7 316.9 L770.6 317.0 L768.5 316.9 L766.4 316.7 L764.4 316.2 L762.4 315.6 L760.5 314.8 L758.6 313.8 L756.9 312.7 L755.2 311.5 L753.7 310.0 L752.4 308.5 L751.2 306.9 L750.1 305.1 L749.3 303.3 L748.6 301.3 L748.1 299.3 L747.8 297.3 L747.7 295.2 L747.9 293.1 L748.2 291.0 L748.7 288.9 L749.4 286.9 L750.3 284.9 L751.4 282.9 L752.6 281.0 L754.0 279.2 L755.6 277.6 L757.2 276.0 L759.0 274.5 L760.9 273.2 L762.9 272.1 L765.0 271.1 L767.1 270.3 L769.2 269.6 L771.3 269.2 L773.5 268.9 L775.6 268.8 L777.7 268.9 L779.7 269.2 L781.6 269.6 L783.5 270.3 L785.3 271.1 L787.0 272.1 L788.6 273.2 L790.0 274.5 L791.3 276.0 L792.5 277.6 L793.5 279.2 L794.4 281.0 L795.1 282.9 L795.6 284.9 L796.0 286.9 L796.2 288.9 L796.2 291.0 L796.1 293.1 Z" fill="none" stroke="#ff1c00" stroke-width="2.083"/>
<g stroke="#ff0000" stroke-width="1.1" fill="none">
<path d="M595.5 275.3h5.2M598.1 272.7v5.2"/>
<path d="M605.8 275.4h5.2M608.4 272.8v5.2"/>
<path d="M600.2 275.9h5.2M602.8 273.3v5.2"/>
<path d="M598.9 275.4h5.2M601.5 272.8v5.2"/>
<path d="M599.9 275.6h5.2M602.5 273.0v5.2"/>
<path d="M600.7 275.6h5.2M603.3 273.0v5.2"/>
<path d="M599.9 276.0h5.2M602.5 273.4v5.2"/>
<path d="M596.0 229.5h5.2M598.6 226.9v5.2"/>
<path d="M737.6 246.9h5.2M740.2 244.3v5.2"/>
<path d="M748.3 253.2h5.2M750.9 250.6v5.2"/>
<path d="M766.3 285.2h5.2M768.9 282.6v5.2"/>
<path d="M760.0 292.2h5.2M762.6 289.6v5.2"/>
<path d="M760.1 295.6h5.2M762.7 293.0v5.2"/>
<path d="M764.6 293.4h5.2M767.2 290.8v5.2"/>
<path d="M770.0 296.2h5.2M772.6 293.6v5.2"/>
<path d="M764.2 293.9h5.2M766.8 291.3v5.2"/>
<path d="M765.0 294.7h5.2M767.6 292.1v5.2"/>
</g>
<g font-family="'DejaVu Sans','Liberation Sans',sans-serif" font-size="11.11" fill="#ffffff" text-anchor="middle">
<text x="600.9" y="235.0">EGE</text>
<text x="603.6" y="274.2">ORI</text>
<text x="745.3" y="255.2">CTA</text>
<text x="772.0" y="296.1">STA</text>
</g>
</g>
<g font-family="'DejaVu Sans','Liberation Sans',sans-serif" font-size="9.72" fill="#808080" text-anchor="middle">
<text x="889.9" y="623.6" text-anchor="start">−90<tspan dx="1.9" dy="-3.2" font-size="7.2" stroke="#808080" stroke-width="0.3">°</tspan></text>
<text x="889.9" y="525.9" text-anchor="start">−60<tspan dx="1.9" dy="-3.2" font-size="7.2" stroke="#808080" stroke-width="0.3">°</tspan></text>
<text x="889.9" y="428.1" text-anchor="start">−30<tspan dx="1.9" dy="-3.2" font-size="7.2" stroke="#808080" stroke-width="0.3">°</tspan></text>
<text x="889.9" y="220.8" text-anchor="start">+30<tspan dx="1.9" dy="-3.2" font-size="7.2" stroke="#808080" stroke-width="0.3">°</tspan></text>
<text x="889.9" y="123.0" text-anchor="start">+60<tspan dx="1.9" dy="-3.2" font-size="7.2" stroke="#808080" stroke-width="0.3">°</tspan></text>
<text x="889.9" y="25.2" text-anchor="start">+90<tspan dx="1.9" dy="-3.2" font-size="7.2" stroke="#808080" stroke-width="0.3">°</tspan></text>
<text x="891.8" y="330.1" text-anchor="start">+0<tspan dx="1.9" dy="-3.2" font-size="7.2" stroke="#808080" stroke-width="0.3">°</tspan></text>
<text x="790.9" y="330.1" text-anchor="start">+30<tspan dx="1.9" dy="-3.2" font-size="7.2" stroke="#808080" stroke-width="0.3">°</tspan></text>
<text x="693.1" y="330.1" text-anchor="start">+60<tspan dx="1.9" dy="-3.2" font-size="7.2" stroke="#808080" stroke-width="0.3">°</tspan></text>
<text x="595.3" y="330.1" text-anchor="start">+90<tspan dx="1.9" dy="-3.2" font-size="7.2" stroke="#808080" stroke-width="0.3">°</tspan></text>
<text x="494.5" y="330.1" text-anchor="start">+120<tspan dx="1.9" dy="-3.2" font-size="7.2" stroke="#808080" stroke-width="0.3">°</tspan></text>
<text x="396.7" y="330.1" text-anchor="start">+150<tspan dx="1.9" dy="-3.2" font-size="7.2" stroke="#808080" stroke-width="0.3">°</tspan></text>
<text x="298.9" y="330.1" text-anchor="start">+180<tspan dx="1.9" dy="-3.2" font-size="7.2" stroke="#808080" stroke-width="0.3">°</tspan></text>
<text x="1472.5" y="330.1" text-anchor="start">+180<tspan dx="1.9" dy="-3.2" font-size="7.2" stroke="#808080" stroke-width="0.3">°</tspan></text>
<text x="1374.7" y="330.1" text-anchor="start">+210<tspan dx="1.9" dy="-3.2" font-size="7.2" stroke="#808080" stroke-width="0.3">°</tspan></text>
<text x="1276.9" y="330.1" text-anchor="start">+240<tspan dx="1.9" dy="-3.2" font-size="7.2" stroke="#808080" stroke-width="0.3">°</tspan></text>
<text x="1179.1" y="330.1" text-anchor="start">+270<tspan dx="1.9" dy="-3.2" font-size="7.2" stroke="#808080" stroke-width="0.3">°</tspan></text>
<text x="1081.3" y="330.1" text-anchor="start">+300<tspan dx="1.9" dy="-3.2" font-size="7.2" stroke="#808080" stroke-width="0.3">°</tspan></text>
<text x="983.5" y="330.1" text-anchor="start">+330<tspan dx="1.9" dy="-3.2" font-size="7.2" stroke="#808080" stroke-width="0.3">°</tspan></text>
</g>
<g font-family="'DejaVu Sans Mono','Liberation Mono',monospace" font-size="13.89" fill="#ffffff" xml:space="preserve">
<text x="315.1" y="29.8">NZ0007</text>
<text x="315.1" y="42.8">Beg: 20251020 08:51:54 (sol = 206.87°)</text>
<text x="315.1" y="56.8">End: 20251020 16:24:19 (sol = 207.18°)</text>
<text x="315.1" y="68.8">--------------------------------------</text>
<text x="315.1" y="81.8">...: 45</text>
<text x="315.1" y="94.8">ORI: 7</text>
<text x="315.1" y="107.9">STA: 7</text>
<text x="315.1" y="121.5">CTA: 2</text>
<text x="315.1" y="134.5">EGE: 1</text>
</g>
<g stroke="#ffffff" stroke-opacity="0.45" stroke-width="2.083" stroke-dasharray="2.083 3.437" stroke-dashoffset="0.36">
<line x1="74.0" y1="641.5" x2="74.0" y2="842.3"/>
<line x1="218.0" y1="641.5" x2="218.0" y2="842.3"/>
<line x1="365.0" y1="641.5" x2="365.0" y2="842.3"/>
<line x1="505.0" y1="641.5" x2="505.0" y2="842.3"/>
<line x1="650.0" y1="641.5" x2="650.0" y2="842.3"/>
<line x1="797.0" y1="641.5" x2="797.0" y2="842.3"/>
<line x1="940.0" y1="641.5" x2="940.0" y2="842.3"/>
<line x1="1091.0" y1="641.5" x2="1091.0" y2="842.3"/>
<line x1="1239.0" y1="641.5" x2="1239.0" y2="842.3"/>
<line x1="1394.0" y1="641.5" x2="1394.0" y2="842.3"/>
<line x1="1548.0" y1="641.5" x2="1548.0" y2="842.3"/>
<line x1="1687.0" y1="641.5" x2="1687.0" y2="842.3"/>
</g>
<g clip-path="url(#actclip)" font-family="'DejaVu Sans','Liberation Sans',sans-serif" font-size="27.78" fill="#4d4d4d" text-anchor="end">
<text transform="translate(148.5,643.0) rotate(-90)">APR</text>
<text transform="translate(294.0,645.7) rotate(-90)">MAY</text>
<text transform="translate(435.6,640.7) rotate(-90)">JUN</text>
<text transform="translate(576.3,641.1) rotate(-90)">JUL</text>
<text transform="translate(722.5,642.0) rotate(-90)">AUG</text>
<text transform="translate(872.2,644.3) rotate(-90)">SEP</text>
<text transform="translate(1016.3,643.9) rotate(-90)">OCT</text>
<text transform="translate(1169.0,644.8) rotate(-90)">NOV</text>
<text transform="translate(1318.0,644.3) rotate(-90)">DEC</text>
<text transform="translate(1469.0,640.7) rotate(-90)">JAN</text>
<text transform="translate(1627.8,645.2) rotate(-90)">FEB</text>
<text transform="translate(1765.8,644.9) rotate(-90)">MAR</text>
</g>
<g stroke="#ec84ee" stroke-width="4" stroke-linecap="butt">
<line x1="105.6" y1="834.0" x2="129.4" y2="834.0"/>
<line x1="164.5" y1="834.0" x2="345.3" y2="834.0"/>
<line x1="365.7" y1="834.0" x2="624.9" y2="834.0"/>
<line x1="635.5" y1="834.0" x2="786.8" y2="834.0"/>
<line x1="807.2" y1="834.0" x2="899.7" y2="834.0"/>
<line x1="920.0" y1="834.0" x2="973.3" y2="834.0"/>
<line x1="983.8" y1="834.0" x2="1066.5" y2="834.0"/>
<line x1="1081.9" y1="834.0" x2="1203.9" y2="834.0"/>
<line x1="1243.8" y1="834.0" x2="1326.5" y2="834.0"/>
<line x1="1337.1" y1="834.0" x2="1355.9" y2="834.0"/>
<line x1="1381.2" y1="834.0" x2="1444.3" y2="834.0"/>
<line x1="1459.7" y1="834.0" x2="1512.9" y2="834.0"/>
<line x1="1523.5" y1="834.0" x2="1547.3" y2="834.0"/>
<line x1="1724.6" y1="834.0" x2="1748.4" y2="834.0"/>
<line x1="1759.0" y1="834.0" x2="1782.8" y2="834.0"/>
</g>
<g stroke="#dc11ff" stroke-width="4" stroke-linecap="butt">
<line x1="164.5" y1="818.0" x2="188.3" y2="818.0"/>
<line x1="223.4" y1="818.0" x2="286.4" y2="818.0"/>
<line x1="311.7" y1="818.0" x2="340.4" y2="818.0"/>
<line x1="365.7" y1="818.0" x2="492.5" y2="818.0"/>
<line x1="507.9" y1="818.0" x2="654.4" y2="818.0"/>
<line x1="704.2" y1="818.0" x2="737.8" y2="818.0"/>
<line x1="772.9" y1="818.0" x2="845.7" y2="818.0"/>
<line x1="871.0" y1="818.0" x2="988.0" y2="818.0"/>
<line x1="1003.4" y1="818.0" x2="1017.4" y2="818.0"/>
<line x1="1062.3" y1="818.0" x2="1213.7" y2="818.0"/>
<line x1="1243.8" y1="818.0" x2="1267.6" y2="818.0"/>
<line x1="1292.9" y1="818.0" x2="1316.7" y2="818.0"/>
<line x1="1342.0" y1="818.0" x2="1365.8" y2="818.0"/>
<line x1="1386.1" y1="818.0" x2="1429.5" y2="818.0"/>
<line x1="1459.7" y1="818.0" x2="1483.5" y2="818.0"/>
<line x1="1548.0" y1="818.0" x2="1571.8" y2="818.0"/>
</g>
<g stroke="#ff1c00" stroke-width="4" stroke-linecap="butt">
<line x1="164.5" y1="802.0" x2="188.3" y2="802.0"/>
<line x1="257.7" y1="802.0" x2="487.6" y2="802.0"/>
<line x1="507.9" y1="802.0" x2="615.1" y2="802.0"/>
<line x1="625.7" y1="802.0" x2="718.1" y2="802.0"/>
<line x1="728.7" y1="802.0" x2="826.1" y2="802.0"/>
<line x1="949.5" y1="802.0" x2="1149.9" y2="802.0"/>
<line x1="1160.4" y1="802.0" x2="1248.0" y2="802.0"/>
<line x1="1258.6" y1="802.0" x2="1444.3" y2="802.0"/>
<line x1="1459.7" y1="802.0" x2="1483.5" y2="802.0"/>
<line x1="1552.9" y1="802.0" x2="1576.7" y2="802.0"/>
</g>
<g stroke="#ffb10d" stroke-width="4" stroke-linecap="butt">
<line x1="193.9" y1="785.0" x2="217.7" y2="785.0"/>
<line x1="321.5" y1="785.0" x2="507.2" y2="785.0"/>
<line x1="517.7" y1="785.0" x2="541.5" y2="785.0"/>
<line x1="557.0" y1="785.0" x2="683.8" y2="785.0"/>
<line x1="807.2" y1="785.0" x2="831.0" y2="785.0"/>
<line x1="954.4" y1="785.0" x2="973.3" y2="785.0"/>
<line x1="988.7" y1="785.0" x2="1125.4" y2="785.0"/>
<line x1="1155.5" y1="785.0" x2="1218.6" y2="785.0"/>
<line x1="1243.8" y1="785.0" x2="1267.6" y2="785.0"/>
<line x1="1317.4" y1="785.0" x2="1341.2" y2="785.0"/>
<line x1="1395.9" y1="785.0" x2="1419.7" y2="785.0"/>
<line x1="1464.6" y1="785.0" x2="1650.3" y2="785.0"/>
</g>
<g stroke="#fff000" stroke-width="4" stroke-linecap="butt">
<line x1="341.1" y1="769.0" x2="369.8" y2="769.0"/>
<line x1="409.8" y1="769.0" x2="448.3" y2="769.0"/>
<line x1="468.7" y1="769.0" x2="492.5" y2="769.0"/>
<line x1="527.6" y1="769.0" x2="546.4" y2="769.0"/>
<line x1="561.9" y1="769.0" x2="590.6" y2="769.0"/>
<line x1="615.9" y1="769.0" x2="649.5" y2="769.0"/>
<line x1="959.3" y1="769.0" x2="988.0" y2="769.0"/>
<line x1="1062.3" y1="769.0" x2="1086.1" y2="769.0"/>
<line x1="1101.6" y1="769.0" x2="1125.4" y2="769.0"/>
<line x1="1160.4" y1="769.0" x2="1194.0" y2="769.0"/>
<line x1="1248.8" y1="769.0" x2="1272.5" y2="769.0"/>
<line x1="1425.4" y1="769.0" x2="1512.9" y2="769.0"/>
</g>
<g stroke="#a4ff27" stroke-width="4" stroke-linecap="butt">
<line x1="419.6" y1="752.0" x2="443.4" y2="752.0"/>
<line x1="532.5" y1="752.0" x2="556.2" y2="752.0"/>
<line x1="566.8" y1="752.0" x2="590.6" y2="752.0"/>
<line x1="620.8" y1="752.0" x2="742.7" y2="752.0"/>
<line x1="969.1" y1="752.0" x2="1135.2" y2="752.0"/>
<line x1="1185.0" y1="752.0" x2="1346.1" y2="752.0"/>
<line x1="1469.5" y1="752.0" x2="1493.3" y2="752.0"/>
</g>
<g stroke="#59d100" stroke-width="4" stroke-linecap="butt">
<line x1="429.4" y1="736.0" x2="453.2" y2="736.0"/>
<line x1="576.6" y1="736.0" x2="732.9" y2="736.0"/>
<line x1="993.6" y1="736.0" x2="1105.7" y2="736.0"/>
<line x1="1116.3" y1="736.0" x2="1223.5" y2="736.0"/>
<line x1="1263.5" y1="736.0" x2="1292.2" y2="736.0"/>
<line x1="1489.2" y1="736.0" x2="1512.9" y2="736.0"/>
</g>
<g stroke="#00fa72" stroke-width="4" stroke-linecap="butt">
<line x1="591.3" y1="720.0" x2="615.1" y2="720.0"/>
<line x1="655.1" y1="720.0" x2="772.1" y2="720.0"/>
<line x1="1072.1" y1="720.0" x2="1243.1" y2="720.0"/>
<line x1="1263.5" y1="720.0" x2="1287.3" y2="720.0"/>
</g>
<g stroke="#00e0ff" stroke-width="4" stroke-linecap="butt">
<line x1="596.2" y1="703.0" x2="732.9" y2="703.0"/>
<line x1="1091.8" y1="703.0" x2="1120.4" y2="703.0"/>
<line x1="1199.7" y1="703.0" x2="1223.5" y2="703.0"/>
<line x1="1273.3" y1="703.0" x2="1326.5" y2="703.0"/>
</g>
<g stroke="#000dcd" stroke-width="4" stroke-linecap="butt">
<line x1="1111.4" y1="687.0" x2="1135.2" y2="687.0"/>
</g>
<g stroke="#ffffff" stroke-width="2.6">
<path d="M112.4 834.0H120.7M116.5 829.8V838.2"/>
<path d="M240.4 834.0H248.8M244.6 829.8V838.2"/>
<path d="M510.8 834.0H519.1M514.9 829.8V838.2"/>
<path d="M707.0 834.0H715.3M711.2 829.8V838.2"/>
<path d="M832.6 834.0H840.9M836.8 829.8V838.2"/>
<path d="M962.1 834.0H970.4M966.3 829.8V838.2"/>
<path d="M986.6 834.0H995.0M990.8 829.8V838.2"/>
<path d="M1115.7 834.0H1124.0M1119.8 829.8V838.2"/>
<path d="M1295.7 834.0H1304.1M1299.9 829.8V838.2"/>
<path d="M1341.8 834.0H1350.2M1346.0 829.8V838.2"/>
<path d="M1413.5 834.0H1421.8M1417.6 829.8V838.2"/>
<path d="M1482.2 834.0H1490.5M1486.3 829.8V838.2"/>
<path d="M1531.2 834.0H1539.6M1535.4 829.8V838.2"/>
<path d="M1732.4 834.0H1740.7M1736.5 829.8V838.2"/>
<path d="M1766.7 834.0H1775.0M1770.9 829.8V838.2"/>
<path d="M171.7 818.0H180.1M175.9 813.8V822.2"/>
<path d="M255.6 818.0H264.0M259.8 813.8V822.2"/>
<path d="M322.8 818.0H331.2M327.0 813.8V822.2"/>
<path d="M437.2 818.0H445.5M441.3 813.8V822.2"/>
<path d="M599.1 818.0H607.4M603.2 813.8V822.2"/>
<path d="M716.8 818.0H725.1M721.0 813.8V822.2"/>
<path d="M792.4 818.0H800.7M796.5 813.8V822.2"/>
<path d="M938.6 818.0H946.9M942.7 813.8V822.2"/>
<path d="M1006.3 818.0H1014.6M1010.4 813.8V822.2"/>
<path d="M1153.5 818.0H1161.8M1157.6 813.8V822.2"/>
<path d="M1251.6 818.0H1259.9M1255.7 813.8V822.2"/>
<path d="M1300.6 818.0H1309.0M1304.8 813.8V822.2"/>
<path d="M1349.7 818.0H1358.0M1353.9 813.8V822.2"/>
<path d="M1403.7 818.0H1412.0M1407.8 813.8V822.2"/>
<path d="M1467.4 818.0H1475.8M1471.6 813.8V822.2"/>
<path d="M1555.8 818.0H1564.1M1559.9 813.8V822.2"/>
<path d="M173.7 802.0H182.0M177.9 797.8V806.2"/>
<path d="M378.3 802.0H386.6M382.5 797.8V806.2"/>
<path d="M545.1 802.0H553.4M549.3 797.8V806.2"/>
<path d="M682.5 802.0H690.8M686.6 797.8V806.2"/>
<path d="M741.3 802.0H749.7M745.5 797.8V806.2"/>
<path d="M1075.0 802.0H1083.3M1079.1 797.8V806.2"/>
<path d="M1217.2 802.0H1225.6M1221.4 797.8V806.2"/>
<path d="M1305.5 802.0H1313.9M1309.7 797.8V806.2"/>
<path d="M1467.4 802.0H1475.8M1471.6 797.8V806.2"/>
<path d="M1560.7 802.0H1569.0M1564.8 797.8V806.2"/>
<path d="M201.7 785.0H210.0M205.8 780.8V789.2"/>
<path d="M399.4 785.0H407.7M403.5 780.8V789.2"/>
<path d="M525.5 785.0H533.8M529.6 780.8V789.2"/>
<path d="M638.3 785.0H646.6M642.5 780.8V789.2"/>
<path d="M814.9 785.0H823.3M819.1 780.8V789.2"/>
<path d="M958.7 785.0H967.0M962.8 780.8V789.2"/>
<path d="M1039.6 785.0H1048.0M1043.8 780.8V789.2"/>
<path d="M1187.8 785.0H1196.1M1192.0 780.8V789.2"/>
<path d="M1251.6 785.0H1259.9M1255.7 780.8V789.2"/>
<path d="M1325.2 785.0H1333.5M1329.3 780.8V789.2"/>
<path d="M1403.7 785.0H1412.0M1407.8 780.8V789.2"/>
<path d="M1545.9 785.0H1554.3M1550.1 780.8V789.2"/>
<path d="M355.7 769.0H364.1M359.9 764.8V773.2"/>
<path d="M425.9 769.0H434.2M430.0 764.8V773.2"/>
<path d="M476.4 769.0H484.7M480.6 764.8V773.2"/>
<path d="M535.3 769.0H543.6M539.4 764.8V773.2"/>
<path d="M570.6 769.0H578.9M574.8 764.8V773.2"/>
<path d="M631.0 769.0H639.3M635.1 764.8V773.2"/>
<path d="M973.9 769.0H982.2M978.1 764.8V773.2"/>
<path d="M1070.0 769.0H1078.4M1074.2 764.8V773.2"/>
<path d="M1109.3 769.0H1117.6M1113.5 764.8V773.2"/>
<path d="M1178.0 769.0H1186.3M1182.1 764.8V773.2"/>
<path d="M1256.5 769.0H1264.8M1260.6 764.8V773.2"/>
<path d="M1467.4 769.0H1475.8M1471.6 764.8V773.2"/>
<path d="M427.3 752.0H435.7M431.5 747.8V756.2"/>
<path d="M540.2 752.0H548.5M544.4 747.8V756.2"/>
<path d="M574.5 752.0H582.9M578.7 747.8V756.2"/>
<path d="M704.1 752.0H712.4M708.2 747.8V756.2"/>
<path d="M1094.6 752.0H1102.9M1098.7 747.8V756.2"/>
<path d="M1271.2 752.0H1279.5M1275.4 747.8V756.2"/>
<path d="M1477.3 752.0H1485.6M1481.4 747.8V756.2"/>
<path d="M437.2 736.0H445.5M441.3 731.8V740.2"/>
<path d="M631.0 736.0H639.3M635.1 731.8V740.2"/>
<path d="M1038.6 736.0H1047.0M1042.8 731.8V740.2"/>
<path d="M1168.2 736.0H1176.5M1172.3 731.8V740.2"/>
<path d="M1274.6 736.0H1283.0M1278.8 731.8V740.2"/>
<path d="M1496.9 736.0H1505.2M1501.0 731.8V740.2"/>
<path d="M599.1 720.0H607.4M603.2 715.8V724.2"/>
<path d="M726.6 720.0H735.0M730.8 715.8V724.2"/>
<path d="M1187.8 720.0H1196.1M1192.0 715.8V724.2"/>
<path d="M1271.2 720.0H1279.5M1275.4 715.8V724.2"/>
<path d="M687.4 703.0H695.7M691.5 698.8V707.2"/>
<path d="M1101.9 703.0H1110.3M1106.1 698.8V707.2"/>
<path d="M1207.4 703.0H1215.8M1211.6 698.8V707.2"/>
<path d="M1300.6 703.0H1309.0M1304.8 698.8V707.2"/>
<path d="M1119.1 687.0H1127.4M1123.3 682.8V691.2"/>
</g>
<line x1="1035.0" y1="641.5" x2="1035.0" y2="842.3" stroke="#ff0000" stroke-width="2.5" stroke-dasharray="5.14 2.22" stroke-dashoffset="2.56"/>
<g font-family="'DejaVu Sans','Liberation Sans',sans-serif" font-size="11.11" fill="#ffffff" text-anchor="middle" letter-spacing="-0.3">
<text x="117.3" y="831.5">KSE</text>
<text x="254.7" y="831.5">ETA</text>
<text x="495.1" y="831.5">NZC</text>
<text x="711.0" y="831.5">NDA</text>
<text x="853.2" y="831.5">SPE</text>
<text x="946.5" y="831.5">ARD</text>
<text x="1025.0" y="831.5">EGE</text>
<text x="1142.7" y="831.5">NTA</text>
<text x="1285.0" y="831.5">MON</text>
<text x="1343.8" y="831.5">URS</text>
<text x="1412.5" y="831.5">AHY</text>
<text x="1486.1" y="831.5">GUM</text>
<text x="1535.2" y="831.5">OHY</text>
<text x="1736.3" y="831.5">XHE</text>
<text x="1770.7" y="831.5">EVI</text>
<text x="176.2" y="815.5">AVB</text>
<text x="254.7" y="815.5">ELY</text>
<text x="323.4" y="815.5">CAM</text>
<text x="431.3" y="815.5">SSG</text>
<text x="578.5" y="815.5">PCA</text>
<text x="720.8" y="815.5">AUD</text>
<text x="809.1" y="815.5">AUR</text>
<text x="931.7" y="815.5">DSX</text>
<text x="1010.2" y="815.5">OCU</text>
<text x="1137.8" y="815.5">OER</text>
<text x="1255.5" y="815.5">DKD</text>
<text x="1304.6" y="815.5">DSV</text>
<text x="1353.7" y="815.5">ALY</text>
<text x="1407.6" y="815.5">JLE</text>
<text x="1471.4" y="815.5">SCC</text>
<text x="1559.7" y="815.5">FEV</text>
<text x="176.2" y="799.5">LYR</text>
<text x="372.4" y="799.5">JMC</text>
<text x="558.9" y="799.5">JPE</text>
<text x="671.7" y="799.5">PAU</text>
<text x="774.7" y="799.5">NIA</text>
<text x="1049.5" y="799.5">STA</text>
<text x="1206.5" y="799.5">NOO</text>
<text x="1353.7" y="799.5">COM</text>
<text x="1471.4" y="799.5">NCC</text>
<text x="1564.6" y="799.5">FED</text>
<text x="205.6" y="782.5">HVI</text>
<text x="411.7" y="782.5">ARI</text>
<text x="529.4" y="782.5">SZC</text>
<text x="617.7" y="782.5">CAP</text>
<text x="818.9" y="782.5">NUE</text>
<text x="961.2" y="782.5">OCT</text>
<text x="1059.3" y="782.5">ORI</text>
<text x="1186.9" y="782.5">AMO</text>
<text x="1255.5" y="782.5">DPC</text>
<text x="1329.1" y="782.5">XVI</text>
<text x="1407.6" y="782.5">QUA</text>
<text x="1559.7" y="782.5">AAN</text>
<text x="352.8" y="766.5">TAH</text>
<text x="431.3" y="766.5">JEA</text>
<text x="480.4" y="766.5">JIP</text>
<text x="539.2" y="766.5">PPS</text>
<text x="578.5" y="766.5">ZCS</text>
<text x="632.5" y="766.5">GDR</text>
<text x="971.0" y="766.5">DRA</text>
<text x="1074.0" y="766.5">LUM</text>
<text x="1113.3" y="766.5">RPU</text>
<text x="1177.0" y="766.5">THA</text>
<text x="1260.4" y="766.5">PSU</text>
<text x="1471.4" y="766.5">XCB</text>
<text x="431.3" y="749.5">JRC</text>
<text x="544.2" y="749.5">CAN</text>
<text x="578.5" y="749.5">FAN</text>
<text x="681.5" y="749.5">PER</text>
<text x="1049.5" y="749.5">CTA</text>
<text x="1265.4" y="749.5">HYD</text>
<text x="1481.2" y="749.5">XUM</text>
<text x="441.1" y="733.5">COR</text>
<text x="657.0" y="733.5">SDA</text>
<text x="1049.5" y="733.5">LMI</text>
<text x="1167.2" y="733.5">LEO</text>
<text x="1275.2" y="733.5">EHY</text>
<text x="1500.8" y="733.5">ECV</text>
<text x="603.0" y="717.5">JXA</text>
<text x="715.9" y="717.5">KCG</text>
<text x="1157.4" y="717.5">AND</text>
<text x="1275.2" y="717.5">DAD</text>
<text x="666.8" y="700.5">ERI</text>
<text x="1108.4" y="700.5">SLD</text>
<text x="1211.4" y="700.5">ORS</text>
<text x="1299.7" y="700.5">GEM</text>
<text x="1123.1" y="684.5">KUM</text>
</g>
<rect x="19.5" y="641.5" width="1766" height="201" fill="none" stroke="#ffffff" stroke-width="1.1"/>
<g stroke="#ffffff" stroke-width="1.11">
<line x1="19.5" y1="843.0" x2="19.5" y2="847.9"/>
<line x1="264.5" y1="843.0" x2="264.5" y2="847.9"/>
<line x1="510.5" y1="843.0" x2="510.5" y2="847.9"/>
<line x1="755.5" y1="843.0" x2="755.5" y2="847.9"/>
<line x1="1000.5" y1="843.0" x2="1000.5" y2="847.9"/>
<line x1="1245.5" y1="843.0" x2="1245.5" y2="847.9"/>
<line x1="1491.5" y1="843.0" x2="1491.5" y2="847.9"/>
<line x1="1736.5" y1="843.0" x2="1736.5" y2="847.9"/>
</g>
<g font-family="'DejaVu Sans','Liberation Sans',sans-serif" font-size="13.89" fill="#ffffff" text-anchor="middle">
<text x="19.4" y="862.2" letter-spacing="-0.4">0</text>
<text x="264.9" y="862.2" letter-spacing="-0.4">50</text>
<text x="510.2" y="862.2" letter-spacing="-0.4">100</text>
<text x="755.5" y="862.2" letter-spacing="-0.4">150</text>
<text x="1000.8" y="862.2" letter-spacing="-0.4">200</text>
<text x="1246.1" y="862.2" letter-spacing="-0.4">250</text>
<text x="1491.4" y="862.2" letter-spacing="-0.4">300</text>
<text x="1736.7" y="862.2" letter-spacing="-0.4">350</text>
<text x="902.5" y="881.8">Solar longitude (deg)</text>
</g>
</svg></body></html>
